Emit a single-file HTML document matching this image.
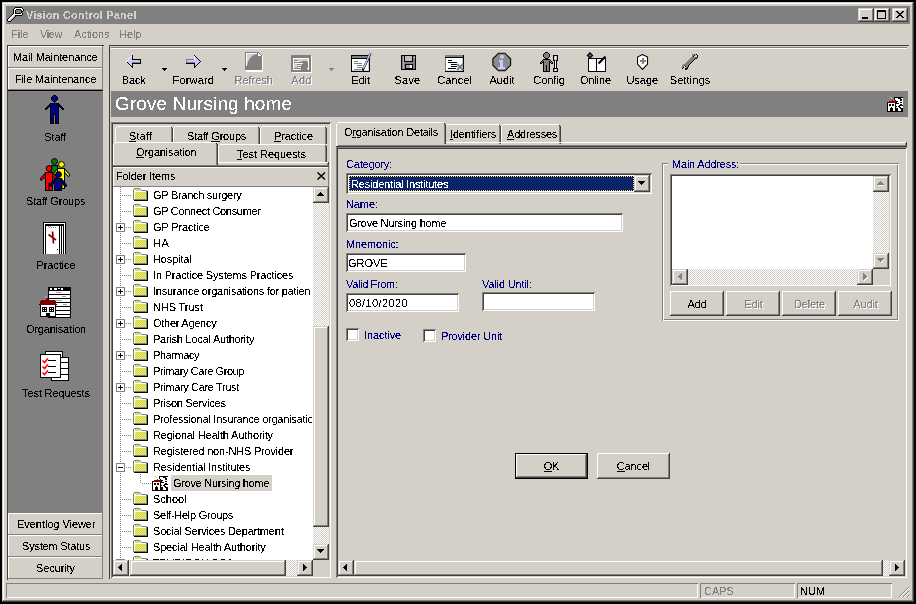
<!DOCTYPE html>
<html><head><meta charset="utf-8"><title>Vision Control Panel</title>
<style>
html,body{margin:0;padding:0}
body{width:916px;height:604px;background:#000;position:relative;overflow:hidden;font-family:"Liberation Sans",sans-serif}
body div,body span{position:absolute;box-sizing:border-box}
span{white-space:pre}
u{text-decoration:none;box-shadow:inset 0 -1px #000}
span{filter:url(#crisp)}
</style></head><body>
<svg width="0" height="0" style="position:absolute"><filter id="crisp"><feComponentTransfer><feFuncA type="discrete" tableValues="0 0 0 0 0 0 0 0 0 1 1 1 1 1 1 1 1 1 1 1"/></feComponentTransfer></filter></svg>
<div style="left:2px;top:2px;width:912px;height:600px;background:#d4d0c8;box-shadow:inset -1px -1px #404040,inset 1px 1px #d4d0c8,inset -2px -2px #808080,inset 2px 2px #ffffff"></div><div style="left:6px;top:6px;width:904px;height:18px;background:#808080"></div><span style="left:26px;top:9px;font:bold 11px/13px 'Liberation Sans',sans-serif;color:#d4d0c8;letter-spacing:0.15px;">Vision Control Panel</span><svg style="position:absolute;left:7px;top:7px;" width="17" height="15" viewBox="0 0 17 15" shape-rendering="crispEdges"><rect x="8" y="0" width="7" height="1" fill="#000"/><rect x="7" y="1" width="1" height="1" fill="#000"/><rect x="8" y="1" width="7" height="1" fill="#fff"/><rect x="15" y="1" width="1" height="1" fill="#000"/><rect x="6" y="2" width="1" height="1" fill="#000"/><rect x="7" y="2" width="2" height="1" fill="#fff"/><rect x="9" y="2" width="5" height="1" fill="#000"/><rect x="14" y="2" width="2" height="1" fill="#fff"/><rect x="16" y="2" width="1" height="1" fill="#000"/><rect x="6" y="3" width="1" height="1" fill="#000"/><rect x="7" y="3" width="1" height="1" fill="#fff"/><rect x="8" y="3" width="1" height="1" fill="#000"/><rect x="9" y="3" width="5" height="1" fill="#808080"/><rect x="14" y="3" width="1" height="1" fill="#000"/><rect x="15" y="3" width="1" height="1" fill="#fff"/><rect x="16" y="3" width="1" height="1" fill="#000"/><rect x="6" y="4" width="1" height="1" fill="#000"/><rect x="7" y="4" width="1" height="1" fill="#fff"/><rect x="8" y="4" width="1" height="1" fill="#000"/><rect x="9" y="4" width="5" height="1" fill="#808080"/><rect x="14" y="4" width="2" height="1" fill="#000"/><rect x="6" y="5" width="1" height="1" fill="#000"/><rect x="7" y="5" width="1" height="1" fill="#fff"/><rect x="8" y="5" width="1" height="1" fill="#000"/><rect x="9" y="5" width="5" height="1" fill="#808080"/><rect x="14" y="5" width="1" height="1" fill="#000"/><rect x="6" y="6" width="1" height="1" fill="#000"/><rect x="7" y="6" width="1" height="1" fill="#fff"/><rect x="8" y="6" width="6" height="1" fill="#000"/><rect x="14" y="6" width="1" height="1" fill="#fff"/><rect x="15" y="6" width="1" height="1" fill="#000"/><rect x="5" y="7" width="1" height="1" fill="#000"/><rect x="6" y="7" width="9" height="1" fill="#fff"/><rect x="15" y="7" width="1" height="1" fill="#000"/><rect x="4" y="8" width="1" height="1" fill="#000"/><rect x="5" y="8" width="2" height="1" fill="#fff"/><rect x="7" y="8" width="1" height="1" fill="#c0c0c0"/><rect x="8" y="8" width="7" height="1" fill="#000"/><rect x="3" y="9" width="1" height="1" fill="#000"/><rect x="4" y="9" width="2" height="1" fill="#fff"/><rect x="6" y="9" width="2" height="1" fill="#c0c0c0"/><rect x="8" y="9" width="1" height="1" fill="#000"/><rect x="2" y="10" width="1" height="1" fill="#000"/><rect x="3" y="10" width="2" height="1" fill="#fff"/><rect x="5" y="10" width="2" height="1" fill="#c0c0c0"/><rect x="7" y="10" width="1" height="1" fill="#000"/><rect x="1" y="11" width="1" height="1" fill="#000"/><rect x="2" y="11" width="2" height="1" fill="#fff"/><rect x="4" y="11" width="2" height="1" fill="#c0c0c0"/><rect x="6" y="11" width="1" height="1" fill="#000"/><rect x="0" y="12" width="1" height="1" fill="#000"/><rect x="1" y="12" width="2" height="1" fill="#fff"/><rect x="3" y="12" width="2" height="1" fill="#c0c0c0"/><rect x="5" y="12" width="1" height="1" fill="#000"/><rect x="0" y="13" width="1" height="1" fill="#000"/><rect x="1" y="13" width="1" height="1" fill="#fff"/><rect x="2" y="13" width="2" height="1" fill="#c0c0c0"/><rect x="4" y="13" width="1" height="1" fill="#000"/><rect x="1" y="14" width="3" height="1" fill="#000"/></svg><div style="left:858px;top:8px;width:16px;height:14px;background:#d4d0c8;box-shadow:inset -1px -1px #404040,inset 1px 1px #d4d0c8,inset -2px -2px #808080,inset 2px 2px #ffffff"></div><div style="left:874px;top:8px;width:16px;height:14px;background:#d4d0c8;box-shadow:inset -1px -1px #404040,inset 1px 1px #d4d0c8,inset -2px -2px #808080,inset 2px 2px #ffffff"></div><div style="left:892px;top:8px;width:16px;height:14px;background:#d4d0c8;box-shadow:inset -1px -1px #404040,inset 1px 1px #d4d0c8,inset -2px -2px #808080,inset 2px 2px #ffffff"></div><div style="left:862px;top:17px;width:6px;height:2px;background:#000"></div><div style="left:877px;top:10px;width:9px;height:9px;box-shadow:inset 0 2px #000,inset 1px 0 #000,inset -1px 0 #000,inset 0 -1px #000"></div><svg style="position:absolute;left:896px;top:11px;" width="8" height="7" viewBox="0 0 8 7" shape-rendering="crispEdges"><path d="M0 0h2v1h1v1h2v-1h1v-1h2v1h-1v1h-1v1h-1v1h1v1h1v1h1v1h-2v-1h-1v-1h-2v1h-1v1h-2v-1h1v-1h1v-1h1v-1h-1v-1h-1v-1h-1z" fill="#000"/></svg><span style="left:11px;top:28px;font:11px/13px 'Liberation Sans',sans-serif;color:#808080;letter-spacing:0px;">File</span><span style="left:40px;top:28px;font:11px/13px 'Liberation Sans',sans-serif;color:#808080;letter-spacing:-0.4px;">View</span><span style="left:74px;top:28px;font:11px/13px 'Liberation Sans',sans-serif;color:#808080;letter-spacing:-0.1px;">Actions</span><span style="left:119px;top:28px;font:11px/13px 'Liberation Sans',sans-serif;color:#808080;letter-spacing:0px;">Help</span><div style="left:7px;top:45px;width:97px;height:535px;box-shadow:inset 1px 1px #404040"></div><div style="left:8px;top:91px;width:95px;height:422px;background:#808080"></div><div style="left:8px;top:46px;width:95px;height:22px;background:#d4d0c8;box-shadow:inset -1px -1px #808080,inset 1px 1px #ffffff"></div><span style="left:13px;top:51px;font:11px/13px 'Liberation Sans',sans-serif;color:#000;letter-spacing:-0.1px;">Mail Maintenance</span><div style="left:8px;top:68px;width:95px;height:22px;background:#d4d0c8;box-shadow:inset -1px -1px #808080,inset 1px 1px #ffffff"></div><span style="left:15px;top:73px;font:11px/13px 'Liberation Sans',sans-serif;color:#000;letter-spacing:-0.15px;">File Maintenance</span><div style="left:8px;top:90px;width:95px;height:1px;background:#000"></div><div style="left:8px;top:513px;width:95px;height:22px;background:#d4d0c8;box-shadow:inset -1px -1px #808080,inset 1px 1px #ffffff"></div><span style="left:17px;top:518px;font:11px/13px 'Liberation Sans',sans-serif;color:#000;letter-spacing:-0.05px;">Eventlog Viewer</span><div style="left:8px;top:535px;width:95px;height:22px;background:#d4d0c8;box-shadow:inset -1px -1px #808080,inset 1px 1px #ffffff"></div><span style="left:22px;top:540px;font:11px/13px 'Liberation Sans',sans-serif;color:#000;letter-spacing:-0.2px;">System Status</span><div style="left:8px;top:557px;width:95px;height:22px;background:#d4d0c8;box-shadow:inset -1px -1px #808080,inset 1px 1px #ffffff"></div><span style="left:36px;top:562px;font:11px/13px 'Liberation Sans',sans-serif;color:#000;letter-spacing:-0.1px;">Security</span><div style="left:109px;top:45px;width:800px;height:534px;box-shadow:inset 1px 1px #404040"></div><div style="left:111px;top:47px;width:796px;height:1px;background:#808080"></div><div style="left:111px;top:48px;width:796px;height:1px;background:#ffffff"></div><div style="left:111px;top:91px;width:797px;height:26px;background:#808080"></div><span style="left:115px;top:93px;font:19px/22px 'Liberation Sans',sans-serif;color:#ffffff;letter-spacing:0.1px;">Grove Nursing home</span><div style="left:6px;top:583px;width:692px;height:15px;box-shadow:inset 1px 1px #808080,inset -1px -1px #ffffff"></div><div style="left:700px;top:583px;width:95px;height:15px;box-shadow:inset 1px 1px #808080,inset -1px -1px #ffffff"></div><div style="left:797px;top:583px;width:95px;height:15px;box-shadow:inset 1px 1px #808080,inset -1px -1px #ffffff"></div><span style="left:704px;top:585px;font:11px/13px 'Liberation Sans',sans-serif;color:#808080;">CAPS</span><span style="left:800px;top:585px;font:11px/13px 'Liberation Sans',sans-serif;color:#000;">NUM</span><svg style="position:absolute;left:125px;top:55px;" width="17" height="13" viewBox="0 0 17 13" shape-rendering="crispEdges"><rect x="7" y="0" width="1" height="1" fill="#000"/><rect x="6" y="1" width="1" height="1" fill="#fff"/><rect x="7" y="1" width="1" height="1" fill="#000"/><rect x="5" y="2" width="1" height="1" fill="#fff"/><rect x="6" y="2" width="1" height="1" fill="#c8c8ff"/><rect x="7" y="2" width="1" height="1" fill="#000"/><rect x="4" y="3" width="1" height="1" fill="#fff"/><rect x="5" y="3" width="2" height="1" fill="#c8c8ff"/><rect x="7" y="3" width="1" height="1" fill="#000"/><rect x="3" y="4" width="1" height="1" fill="#fff"/><rect x="4" y="4" width="3" height="1" fill="#c8c8ff"/><rect x="7" y="4" width="9" height="1" fill="#000"/><rect x="2" y="5" width="1" height="1" fill="#fff"/><rect x="3" y="5" width="12" height="1" fill="#c8c8ff"/><rect x="15" y="5" width="1" height="1" fill="#000"/><rect x="1" y="6" width="1" height="1" fill="#fff"/><rect x="2" y="6" width="13" height="1" fill="#c8c8ff"/><rect x="15" y="6" width="1" height="1" fill="#000"/><rect x="2" y="7" width="1" height="1" fill="#000"/><rect x="3" y="7" width="4" height="1" fill="#c8c8ff"/><rect x="7" y="7" width="8" height="1" fill="#808080"/><rect x="15" y="7" width="1" height="1" fill="#000"/><rect x="3" y="8" width="1" height="1" fill="#000"/><rect x="4" y="8" width="3" height="1" fill="#c8c8ff"/><rect x="7" y="8" width="9" height="1" fill="#000"/><rect x="4" y="9" width="1" height="1" fill="#000"/><rect x="5" y="9" width="2" height="1" fill="#c8c8ff"/><rect x="7" y="9" width="1" height="1" fill="#000"/><rect x="5" y="10" width="1" height="1" fill="#000"/><rect x="6" y="10" width="1" height="1" fill="#c8c8ff"/><rect x="7" y="10" width="1" height="1" fill="#000"/><rect x="6" y="11" width="2" height="1" fill="#000"/><rect x="7" y="12" width="1" height="1" fill="#000"/></svg><svg style="position:absolute;left:185px;top:55px;" width="17" height="13" viewBox="0 0 17 13" shape-rendering="crispEdges"><rect x="9" y="0" width="1" height="1" fill="#000"/><rect x="9" y="1" width="1" height="1" fill="#fff"/><rect x="10" y="1" width="1" height="1" fill="#000"/><rect x="9" y="2" width="1" height="1" fill="#fff"/><rect x="10" y="2" width="1" height="1" fill="#c8c8ff"/><rect x="11" y="2" width="1" height="1" fill="#000"/><rect x="9" y="3" width="1" height="1" fill="#fff"/><rect x="10" y="3" width="2" height="1" fill="#c8c8ff"/><rect x="12" y="3" width="1" height="1" fill="#000"/><rect x="1" y="4" width="8" height="1" fill="#808080"/><rect x="9" y="4" width="1" height="1" fill="#fff"/><rect x="10" y="4" width="3" height="1" fill="#c8c8ff"/><rect x="13" y="4" width="1" height="1" fill="#000"/><rect x="1" y="5" width="1" height="1" fill="#808080"/><rect x="2" y="5" width="12" height="1" fill="#c8c8ff"/><rect x="14" y="5" width="1" height="1" fill="#000"/><rect x="1" y="6" width="1" height="1" fill="#808080"/><rect x="2" y="6" width="13" height="1" fill="#c8c8ff"/><rect x="15" y="6" width="1" height="1" fill="#000"/><rect x="1" y="7" width="9" height="1" fill="#808080"/><rect x="10" y="7" width="4" height="1" fill="#c8c8ff"/><rect x="14" y="7" width="1" height="1" fill="#000"/><rect x="1" y="8" width="9" height="1" fill="#000"/><rect x="10" y="8" width="3" height="1" fill="#c8c8ff"/><rect x="13" y="8" width="1" height="1" fill="#000"/><rect x="9" y="9" width="1" height="1" fill="#000"/><rect x="10" y="9" width="2" height="1" fill="#c8c8ff"/><rect x="12" y="9" width="1" height="1" fill="#000"/><rect x="9" y="10" width="1" height="1" fill="#000"/><rect x="10" y="10" width="1" height="1" fill="#c8c8ff"/><rect x="11" y="10" width="1" height="1" fill="#000"/><rect x="9" y="11" width="2" height="1" fill="#000"/><rect x="9" y="12" width="1" height="1" fill="#000"/></svg><svg style="position:absolute;left:162px;top:68px;" width="5" height="3" viewBox="0 0 5 3" shape-rendering="crispEdges"><path d="M0 0h5v1h-1v1h-1v1h-1v-1h-1v-1h-1z" fill="#000"/></svg><svg style="position:absolute;left:222px;top:68px;" width="5" height="3" viewBox="0 0 5 3" shape-rendering="crispEdges"><path d="M0 0h5v1h-1v1h-1v1h-1v-1h-1v-1h-1z" fill="#000"/></svg><svg style="position:absolute;left:329px;top:68px;" width="5" height="3" viewBox="0 0 5 3" shape-rendering="crispEdges"><path d="M0 0h5v1h-1v1h-1v1h-1v-1h-1v-1h-1z" fill="#808080"/></svg><svg style="position:absolute;left:245px;top:52px;" width="19" height="20" viewBox="0 0 19 20" shape-rendering="crispEdges"><path d="M1 1h13l4 4v15h-17z" fill="#fff"/><path d="M0 0h13l4 4v14h-17z" fill="#808080"/><path d="M1 1h11v1h-10v12h-1z" fill="#fff"/><path d="M2 2H11.5C7 3 3.5 7 2 13.5Z" fill="#d4d0c8" shape-rendering="auto"/><path d="M13 1h1v1h1v1h1v1h-3z" fill="#fff"/><path d="M12 1h1v3h-1z" fill="#808080"/></svg><svg style="position:absolute;left:290px;top:54px;" width="22" height="19" viewBox="0 0 22 19" shape-rendering="crispEdges"><path d="M2 2h20v17h-20z" fill="#fff"/><path d="M1 1h20v17h-20z" fill="#808080"/><path d="M3 4h16v12h-16z" fill="#fff"/><path d="M4 5h14v10h-14z" fill="#d4d0c8"/><path d="M4 6h4v1h-4zM4 8h9v1h-9zM7 10h4v1h-4zM7 12h4v1h-4zM4 14h9v1h-9z" fill="#808080"/><path d="M12 7h4l2 2v7h-7v-5h1z" fill="#808080"/><path d="M17 14h1v1h-1z" fill="#fff"/><path d="M5 7h4v1h-4zM5 9h8v1h-8zM8 11h3v1h-3zM8 13h3v1h-3z" fill="#fff"/></svg><svg style="position:absolute;left:350px;top:51px;" width="23" height="22" viewBox="0 0 23 22" shape-rendering="crispEdges"><path d="M1 4h19v17h-19z" fill="#000"/><path d="M2 5h18v2h-18z" fill="#808080"/><path d="M2 8h17v12h-17z" fill="#fff"/><path d="M2 19h17v1h-17zM18 8h1v12h-1z" fill="#c8c8ff"/><path d="M4 10h4v1h-4zM4 12h8v1h-8zM7 14h5v1h-5zM7 16h5v1h-5zM4 18h7v1h-7z" fill="#808080"/><path d="M12.5 19.5L20.5 2.5" stroke="#000" stroke-width="2.2" shape-rendering="auto"/><path d="M13.3 17.5L20.3 2.5" stroke="#c8c8ff" stroke-width="1.5" shape-rendering="auto"/></svg><svg style="position:absolute;left:401px;top:55px;" width="16" height="16" viewBox="0 0 16 16" shape-rendering="crispEdges"><path d="M0 0h15v15h-15z" fill="#000"/><path d="M1 1h13v13h-13z" fill="#808080"/><path d="M3 1h9v6h-9z" fill="#000"/><path d="M4 1h7v5h-7z" fill="#c0c0c0"/><path d="M4 9h8v5h-8z" fill="#000"/><path d="M5 10h6v3h-6z" fill="#a0a0a0"/><path d="M9 10h2v3h-2z" fill="#fff"/><path d="M13 2h1v1h-1z" fill="#fff"/><path d="M2 1h1v13h-1z" fill="#b0b0b0"/></svg><svg style="position:absolute;left:444px;top:54px;" width="23" height="19" viewBox="0 0 23 19" shape-rendering="crispEdges"><path d="M1 1h19v17h-19z" fill="#000"/><path d="M1 1h18v2h-18z" fill="#808080"/><path d="M2 4h17v13h-17z" fill="#fff"/><path d="M2 16h17v1h-17zM18 4h1v13h-1z" fill="#c8c8ff"/><path d="M1 4h1v13h-1z" fill="#808080"/><path d="M4 6h4v1h-4zM4 8h9v1h-9zM7 10h6v1h-6zM7 12h6v1h-6zM4 14h8v1h-8z" fill="#000"/><path d="M13 10l6 6M19 10l-6 6" stroke="#808080" stroke-width="2" shape-rendering="auto"/></svg><svg style="position:absolute;left:492px;top:52px;" width="20" height="20" viewBox="0 0 20 20" shape-rendering="crispEdges"><path d="M6.5 1.2h6.5l5.6 5.6v6.4l-5.6 5.6h-6.5l-5.6-5.6v-6.4z" fill="#8c8c8c" stroke="#000" stroke-width="1.1" shape-rendering="auto"/><circle cx="10" cy="4.8" r="2" fill="#c8c8ff" shape-rendering="auto"/><path d="M7 8h4v7h2v2h-7v-2h2v-5h-1z" fill="#c8c8ff"/></svg><svg style="position:absolute;left:539px;top:52px;" width="20" height="20" viewBox="0 0 20 20" shape-rendering="crispEdges"><rect x="6" y="0" width="3" height="1" fill="#000"/><rect x="5" y="1" width="1" height="1" fill="#000"/><rect x="6" y="1" width="3" height="1" fill="#808080"/><rect x="9" y="1" width="1" height="1" fill="#000"/><rect x="4" y="2" width="1" height="1" fill="#000"/><rect x="5" y="2" width="5" height="1" fill="#808080"/><rect x="10" y="2" width="1" height="1" fill="#000"/><rect x="4" y="3" width="1" height="1" fill="#000"/><rect x="5" y="3" width="5" height="1" fill="#808080"/><rect x="10" y="3" width="1" height="1" fill="#000"/><rect x="14" y="3" width="5" height="1" fill="#000"/><rect x="4" y="4" width="1" height="1" fill="#000"/><rect x="5" y="4" width="5" height="1" fill="#808080"/><rect x="10" y="4" width="1" height="1" fill="#000"/><rect x="14" y="4" width="1" height="1" fill="#000"/><rect x="15" y="4" width="1" height="1" fill="#c0c0c0"/><rect x="16" y="4" width="1" height="1" fill="#fff"/><rect x="17" y="4" width="1" height="1" fill="#c0c0c0"/><rect x="18" y="4" width="1" height="1" fill="#000"/><rect x="5" y="5" width="1" height="1" fill="#000"/><rect x="6" y="5" width="3" height="1" fill="#808080"/><rect x="9" y="5" width="1" height="1" fill="#000"/><rect x="14" y="5" width="1" height="1" fill="#000"/><rect x="15" y="5" width="1" height="1" fill="#c0c0c0"/><rect x="16" y="5" width="1" height="1" fill="#fff"/><rect x="17" y="5" width="1" height="1" fill="#c0c0c0"/><rect x="18" y="5" width="1" height="1" fill="#000"/><rect x="6" y="6" width="3" height="1" fill="#000"/><rect x="14" y="6" width="1" height="1" fill="#000"/><rect x="15" y="6" width="1" height="1" fill="#c0c0c0"/><rect x="16" y="6" width="1" height="1" fill="#fff"/><rect x="17" y="6" width="1" height="1" fill="#c0c0c0"/><rect x="18" y="6" width="1" height="1" fill="#000"/><rect x="4" y="7" width="7" height="1" fill="#000"/><rect x="14" y="7" width="1" height="1" fill="#000"/><rect x="15" y="7" width="3" height="1" fill="#c0c0c0"/><rect x="18" y="7" width="1" height="1" fill="#000"/><rect x="3" y="8" width="1" height="1" fill="#000"/><rect x="4" y="8" width="7" height="1" fill="#808080"/><rect x="11" y="8" width="1" height="1" fill="#000"/><rect x="14" y="8" width="2" height="1" fill="#000"/><rect x="16" y="8" width="1" height="1" fill="#c0c0c0"/><rect x="17" y="8" width="2" height="1" fill="#000"/><rect x="2" y="9" width="1" height="1" fill="#000"/><rect x="3" y="9" width="1" height="1" fill="#808080"/><rect x="4" y="9" width="1" height="1" fill="#000"/><rect x="5" y="9" width="5" height="1" fill="#808080"/><rect x="10" y="9" width="1" height="1" fill="#000"/><rect x="11" y="9" width="1" height="1" fill="#808080"/><rect x="12" y="9" width="1" height="1" fill="#000"/><rect x="15" y="9" width="1" height="1" fill="#000"/><rect x="16" y="9" width="1" height="1" fill="#fff"/><rect x="17" y="9" width="1" height="1" fill="#000"/><rect x="1" y="10" width="1" height="1" fill="#000"/><rect x="2" y="10" width="1" height="1" fill="#808080"/><rect x="3" y="10" width="2" height="1" fill="#000"/><rect x="5" y="10" width="5" height="1" fill="#808080"/><rect x="10" y="10" width="2" height="1" fill="#000"/><rect x="12" y="10" width="1" height="1" fill="#808080"/><rect x="13" y="10" width="1" height="1" fill="#000"/><rect x="15" y="10" width="1" height="1" fill="#000"/><rect x="16" y="10" width="1" height="1" fill="#fff"/><rect x="17" y="10" width="1" height="1" fill="#000"/><rect x="1" y="11" width="2" height="1" fill="#000"/><rect x="4" y="11" width="1" height="1" fill="#000"/><rect x="5" y="11" width="5" height="1" fill="#808080"/><rect x="10" y="11" width="1" height="1" fill="#000"/><rect x="12" y="11" width="2" height="1" fill="#000"/><rect x="15" y="11" width="1" height="1" fill="#000"/><rect x="16" y="11" width="1" height="1" fill="#fff"/><rect x="17" y="11" width="1" height="1" fill="#000"/><rect x="4" y="12" width="1" height="1" fill="#000"/><rect x="5" y="12" width="5" height="1" fill="#808080"/><rect x="10" y="12" width="1" height="1" fill="#000"/><rect x="15" y="12" width="1" height="1" fill="#000"/><rect x="16" y="12" width="1" height="1" fill="#fff"/><rect x="17" y="12" width="1" height="1" fill="#000"/><rect x="4" y="13" width="1" height="1" fill="#000"/><rect x="5" y="13" width="2" height="1" fill="#808080"/><rect x="7" y="13" width="1" height="1" fill="#000"/><rect x="8" y="13" width="2" height="1" fill="#808080"/><rect x="10" y="13" width="1" height="1" fill="#000"/><rect x="15" y="13" width="1" height="1" fill="#000"/><rect x="16" y="13" width="1" height="1" fill="#fff"/><rect x="17" y="13" width="1" height="1" fill="#000"/><rect x="4" y="14" width="1" height="1" fill="#000"/><rect x="5" y="14" width="2" height="1" fill="#808080"/><rect x="7" y="14" width="1" height="1" fill="#000"/><rect x="8" y="14" width="2" height="1" fill="#808080"/><rect x="10" y="14" width="1" height="1" fill="#000"/><rect x="15" y="14" width="1" height="1" fill="#000"/><rect x="16" y="14" width="1" height="1" fill="#fff"/><rect x="17" y="14" width="1" height="1" fill="#000"/><rect x="4" y="15" width="1" height="1" fill="#000"/><rect x="5" y="15" width="2" height="1" fill="#808080"/><rect x="7" y="15" width="1" height="1" fill="#000"/><rect x="8" y="15" width="2" height="1" fill="#808080"/><rect x="10" y="15" width="1" height="1" fill="#000"/><rect x="15" y="15" width="1" height="1" fill="#000"/><rect x="16" y="15" width="1" height="1" fill="#fff"/><rect x="17" y="15" width="1" height="1" fill="#000"/><rect x="4" y="16" width="1" height="1" fill="#000"/><rect x="5" y="16" width="2" height="1" fill="#808080"/><rect x="7" y="16" width="1" height="1" fill="#000"/><rect x="8" y="16" width="2" height="1" fill="#808080"/><rect x="10" y="16" width="1" height="1" fill="#000"/><rect x="14" y="16" width="5" height="1" fill="#000"/><rect x="4" y="17" width="1" height="1" fill="#000"/><rect x="5" y="17" width="2" height="1" fill="#808080"/><rect x="7" y="17" width="1" height="1" fill="#000"/><rect x="8" y="17" width="2" height="1" fill="#808080"/><rect x="10" y="17" width="1" height="1" fill="#000"/><rect x="14" y="17" width="1" height="1" fill="#000"/><rect x="15" y="17" width="1" height="1" fill="#c0c0c0"/><rect x="16" y="17" width="1" height="1" fill="#fff"/><rect x="17" y="17" width="1" height="1" fill="#c0c0c0"/><rect x="18" y="17" width="1" height="1" fill="#000"/><rect x="4" y="18" width="1" height="1" fill="#000"/><rect x="5" y="18" width="2" height="1" fill="#808080"/><rect x="7" y="18" width="1" height="1" fill="#000"/><rect x="8" y="18" width="2" height="1" fill="#808080"/><rect x="10" y="18" width="1" height="1" fill="#000"/><rect x="14" y="18" width="1" height="1" fill="#000"/><rect x="15" y="18" width="1" height="1" fill="#c0c0c0"/><rect x="16" y="18" width="1" height="1" fill="#fff"/><rect x="17" y="18" width="1" height="1" fill="#c0c0c0"/><rect x="18" y="18" width="1" height="1" fill="#000"/><rect x="4" y="19" width="7" height="1" fill="#000"/><rect x="14" y="19" width="5" height="1" fill="#000"/></svg><svg style="position:absolute;left:586px;top:52px;" width="21" height="21" viewBox="0 0 21 21" shape-rendering="crispEdges"><path d="M4 0.8l2.6 2.6-2.6 2.6-2.6-2.6z" fill="#606060" stroke="#000" stroke-width="1.2" shape-rendering="auto"/><path d="M2 6h18v14h-18z" fill="#000"/><path d="M3 7h7v12h-7zM11 7h8v12h-8z" fill="#fff"/><path d="M12.5 11.5L19.5 4.5" stroke="#000" stroke-width="2.2" shape-rendering="auto"/></svg><svg style="position:absolute;left:637px;top:54px;" width="12" height="16" viewBox="0 0 12 16" shape-rendering="crispEdges"><path d="M5.5 0.6L10.5 3v7l-5 5.4-5-5.4v-7z" fill="#fff" stroke="#000" stroke-width="1.1" shape-rendering="auto"/><path d="M5 4h2v2h2v2h-2v2h-2v-2h-2v-2h2z" fill="#808080"/></svg><svg style="position:absolute;left:681px;top:53px;" width="18" height="17" viewBox="0 0 18 17" shape-rendering="crispEdges"><rect x="11" y="1" width="4" height="1" fill="#808080"/><rect x="15" y="1" width="1" height="1" fill="#000"/><rect x="11" y="2" width="2" height="1" fill="#808080"/><rect x="13" y="2" width="1" height="1" fill="#000"/><rect x="16" y="2" width="1" height="1" fill="#000"/><rect x="11" y="3" width="1" height="1" fill="#808080"/><rect x="12" y="3" width="1" height="1" fill="#000"/><rect x="16" y="3" width="1" height="1" fill="#000"/><rect x="10" y="4" width="6" height="1" fill="#808080"/><rect x="16" y="4" width="1" height="1" fill="#000"/><rect x="9" y="5" width="5" height="1" fill="#808080"/><rect x="14" y="5" width="2" height="1" fill="#000"/><rect x="8" y="6" width="5" height="1" fill="#808080"/><rect x="13" y="6" width="1" height="1" fill="#000"/><rect x="7" y="7" width="5" height="1" fill="#808080"/><rect x="12" y="7" width="1" height="1" fill="#000"/><rect x="6" y="8" width="5" height="1" fill="#808080"/><rect x="11" y="8" width="1" height="1" fill="#000"/><rect x="5" y="9" width="5" height="1" fill="#808080"/><rect x="10" y="9" width="1" height="1" fill="#000"/><rect x="4" y="10" width="5" height="1" fill="#808080"/><rect x="9" y="10" width="1" height="1" fill="#000"/><rect x="2" y="11" width="6" height="1" fill="#808080"/><rect x="8" y="11" width="1" height="1" fill="#000"/><rect x="1" y="12" width="6" height="1" fill="#808080"/><rect x="7" y="12" width="1" height="1" fill="#000"/><rect x="1" y="13" width="2" height="1" fill="#808080"/><rect x="4" y="13" width="1" height="1" fill="#000"/><rect x="5" y="13" width="2" height="1" fill="#808080"/><rect x="7" y="13" width="1" height="1" fill="#000"/><rect x="1" y="14" width="1" height="1" fill="#808080"/><rect x="2" y="14" width="1" height="1" fill="#000"/><rect x="5" y="14" width="1" height="1" fill="#808080"/><rect x="6" y="14" width="1" height="1" fill="#000"/><rect x="1" y="15" width="1" height="1" fill="#000"/><rect x="4" y="15" width="3" height="1" fill="#000"/><rect x="4" y="16" width="2" height="1" fill="#000"/></svg><span style="left:73.69999999999999px;top:74px;width:120px;text-align:center;font:11px/13px 'Liberation Sans',sans-serif;color:#000;letter-spacing:-0.1px;">Back</span><span style="left:133.3px;top:74px;width:120px;text-align:center;font:11px/13px 'Liberation Sans',sans-serif;color:#000;letter-spacing:0.2px;">Forward</span><span style="left:193.7px;top:74px;width:120px;text-align:center;font:11px/13px 'Liberation Sans',sans-serif;color:#808080;letter-spacing:-0.05px;text-shadow:1px 1px #fff;">Refresh</span><span style="left:241.5px;top:74px;width:120px;text-align:center;font:11px/13px 'Liberation Sans',sans-serif;color:#808080;letter-spacing:0.3px;text-shadow:1px 1px #fff;">Add</span><span style="left:300.5px;top:74px;width:120px;text-align:center;font:11px/13px 'Liberation Sans',sans-serif;color:#000;letter-spacing:-0.2px;">Edit</span><span style="left:347.5px;top:74px;width:120px;text-align:center;font:11px/13px 'Liberation Sans',sans-serif;color:#000;letter-spacing:0.2px;">Save</span><span style="left:394.6px;top:74px;width:120px;text-align:center;font:11px/13px 'Liberation Sans',sans-serif;color:#000;letter-spacing:0.1px;">Cancel</span><span style="left:442px;top:74px;width:120px;text-align:center;font:11px/13px 'Liberation Sans',sans-serif;color:#000;letter-spacing:0.0px;">Audit</span><span style="left:489px;top:74px;width:120px;text-align:center;font:11px/13px 'Liberation Sans',sans-serif;color:#000;letter-spacing:-0.05px;">Config</span><span style="left:535.5px;top:74px;width:120px;text-align:center;font:11px/13px 'Liberation Sans',sans-serif;color:#000;letter-spacing:-0.1px;">Online</span><span style="left:582.3px;top:74px;width:120px;text-align:center;font:11px/13px 'Liberation Sans',sans-serif;color:#000;letter-spacing:0.0px;">Usage</span><span style="left:630px;top:74px;width:120px;text-align:center;font:11px/13px 'Liberation Sans',sans-serif;color:#000;letter-spacing:0.1px;">Settings</span><svg style="position:absolute;left:887px;top:97px;" width="16" height="15" viewBox="0 0 16 15" shape-rendering="crispEdges"><rect x="3" y="0" width="1" height="1" fill="#c0c0c0"/><rect x="7" y="0" width="9" height="1" fill="#000"/><rect x="4" y="1" width="1" height="1" fill="#c0c0c0"/><rect x="7" y="1" width="1" height="1" fill="#000"/><rect x="8" y="1" width="3" height="1" fill="#fff"/><rect x="11" y="1" width="3" height="1" fill="#000"/><rect x="14" y="1" width="2" height="1" fill="#fff"/><rect x="7" y="2" width="1" height="1" fill="#000"/><rect x="8" y="2" width="5" height="1" fill="#fff"/><rect x="13" y="2" width="2" height="1" fill="#000"/><rect x="15" y="2" width="1" height="1" fill="#fff"/><rect x="5" y="3" width="1" height="1" fill="#800000"/><rect x="8" y="3" width="1" height="1" fill="#000"/><rect x="9" y="3" width="4" height="1" fill="#fff"/><rect x="13" y="3" width="2" height="1" fill="#000"/><rect x="15" y="3" width="1" height="1" fill="#fff"/><rect x="2" y="4" width="7" height="1" fill="#800000"/><rect x="9" y="4" width="2" height="1" fill="#000"/><rect x="11" y="4" width="5" height="1" fill="#fff"/><rect x="0" y="5" width="1" height="1" fill="#000"/><rect x="1" y="5" width="8" height="1" fill="#800000"/><rect x="9" y="5" width="1" height="1" fill="#000"/><rect x="10" y="5" width="3" height="1" fill="#fff"/><rect x="13" y="5" width="2" height="1" fill="#000"/><rect x="15" y="5" width="1" height="1" fill="#fff"/><rect x="0" y="6" width="1" height="1" fill="#000"/><rect x="1" y="6" width="7" height="1" fill="#fff"/><rect x="8" y="6" width="4" height="1" fill="#000"/><rect x="12" y="6" width="4" height="1" fill="#fff"/><rect x="0" y="7" width="1" height="1" fill="#000"/><rect x="1" y="7" width="1" height="1" fill="#fff"/><rect x="2" y="7" width="2" height="1" fill="#000"/><rect x="4" y="7" width="1" height="1" fill="#fff"/><rect x="5" y="7" width="2" height="1" fill="#000"/><rect x="7" y="7" width="1" height="1" fill="#fff"/><rect x="8" y="7" width="1" height="1" fill="#000"/><rect x="9" y="7" width="4" height="1" fill="#fff"/><rect x="13" y="7" width="2" height="1" fill="#000"/><rect x="15" y="7" width="1" height="1" fill="#fff"/><rect x="0" y="8" width="1" height="1" fill="#000"/><rect x="1" y="8" width="1" height="1" fill="#fff"/><rect x="2" y="8" width="2" height="1" fill="#000"/><rect x="4" y="8" width="1" height="1" fill="#fff"/><rect x="5" y="8" width="2" height="1" fill="#000"/><rect x="7" y="8" width="1" height="1" fill="#fff"/><rect x="8" y="8" width="1" height="1" fill="#000"/><rect x="9" y="8" width="3" height="1" fill="#fff"/><rect x="12" y="8" width="4" height="1" fill="#000"/><rect x="0" y="9" width="1" height="1" fill="#000"/><rect x="1" y="9" width="7" height="1" fill="#fff"/><rect x="8" y="9" width="2" height="1" fill="#000"/><rect x="10" y="9" width="1" height="1" fill="#fff"/><rect x="11" y="9" width="2" height="1" fill="#000"/><rect x="13" y="9" width="3" height="1" fill="#fff"/><rect x="0" y="10" width="1" height="1" fill="#000"/><rect x="1" y="10" width="3" height="1" fill="#fff"/><rect x="4" y="10" width="1" height="1" fill="#000"/><rect x="5" y="10" width="3" height="1" fill="#fff"/><rect x="8" y="10" width="1" height="1" fill="#000"/><rect x="9" y="10" width="3" height="1" fill="#fff"/><rect x="12" y="10" width="2" height="1" fill="#000"/><rect x="14" y="10" width="2" height="1" fill="#fff"/><rect x="0" y="11" width="1" height="1" fill="#000"/><rect x="1" y="11" width="2" height="1" fill="#fff"/><rect x="3" y="11" width="3" height="1" fill="#000"/><rect x="6" y="11" width="2" height="1" fill="#fff"/><rect x="8" y="11" width="3" height="1" fill="#000"/><rect x="11" y="11" width="2" height="1" fill="#fff"/><rect x="13" y="11" width="3" height="1" fill="#000"/><rect x="0" y="12" width="1" height="1" fill="#000"/><rect x="1" y="12" width="2" height="1" fill="#fff"/><rect x="3" y="12" width="3" height="1" fill="#000"/><rect x="6" y="12" width="2" height="1" fill="#fff"/><rect x="8" y="12" width="3" height="1" fill="#000"/><rect x="11" y="12" width="3" height="1" fill="#fff"/><rect x="14" y="12" width="2" height="1" fill="#000"/><rect x="0" y="13" width="1" height="1" fill="#000"/><rect x="1" y="13" width="2" height="1" fill="#fff"/><rect x="3" y="13" width="3" height="1" fill="#000"/><rect x="6" y="13" width="2" height="1" fill="#fff"/><rect x="8" y="13" width="3" height="1" fill="#000"/><rect x="11" y="13" width="3" height="1" fill="#fff"/><rect x="14" y="13" width="2" height="1" fill="#000"/><rect x="0" y="14" width="16" height="1" fill="#000"/></svg><svg style="position:absolute;left:45px;top:95px;" width="19" height="29" viewBox="0 0 19 29" shape-rendering="crispEdges"><rect x="8" y="0" width="3" height="1" fill="#000"/><rect x="7" y="1" width="1" height="1" fill="#000"/><rect x="8" y="1" width="3" height="1" fill="#000080"/><rect x="11" y="1" width="1" height="1" fill="#000"/><rect x="6" y="2" width="1" height="1" fill="#000"/><rect x="7" y="2" width="5" height="1" fill="#000080"/><rect x="12" y="2" width="1" height="1" fill="#000"/><rect x="6" y="3" width="1" height="1" fill="#000"/><rect x="7" y="3" width="5" height="1" fill="#000080"/><rect x="12" y="3" width="1" height="1" fill="#000"/><rect x="6" y="4" width="1" height="1" fill="#000"/><rect x="7" y="4" width="5" height="1" fill="#000080"/><rect x="12" y="4" width="1" height="1" fill="#000"/><rect x="7" y="5" width="1" height="1" fill="#000"/><rect x="8" y="5" width="3" height="1" fill="#000080"/><rect x="11" y="5" width="1" height="1" fill="#000"/><rect x="8" y="6" width="3" height="1" fill="#000"/><rect x="9" y="7" width="1" height="1" fill="#000"/><rect x="5" y="8" width="9" height="1" fill="#000"/><rect x="4" y="9" width="1" height="1" fill="#000"/><rect x="5" y="9" width="9" height="1" fill="#000080"/><rect x="14" y="9" width="1" height="1" fill="#000"/><rect x="3" y="10" width="1" height="1" fill="#000"/><rect x="4" y="10" width="1" height="1" fill="#000080"/><rect x="5" y="10" width="1" height="1" fill="#000"/><rect x="6" y="10" width="7" height="1" fill="#000080"/><rect x="13" y="10" width="1" height="1" fill="#000"/><rect x="14" y="10" width="1" height="1" fill="#000080"/><rect x="15" y="10" width="1" height="1" fill="#000"/><rect x="2" y="11" width="1" height="1" fill="#000"/><rect x="3" y="11" width="1" height="1" fill="#000080"/><rect x="4" y="11" width="2" height="1" fill="#000"/><rect x="6" y="11" width="7" height="1" fill="#000080"/><rect x="13" y="11" width="2" height="1" fill="#000"/><rect x="15" y="11" width="1" height="1" fill="#000080"/><rect x="16" y="11" width="1" height="1" fill="#000"/><rect x="1" y="12" width="1" height="1" fill="#000"/><rect x="2" y="12" width="1" height="1" fill="#000080"/><rect x="3" y="12" width="1" height="1" fill="#000"/><rect x="5" y="12" width="1" height="1" fill="#000"/><rect x="6" y="12" width="7" height="1" fill="#000080"/><rect x="13" y="12" width="1" height="1" fill="#000"/><rect x="15" y="12" width="1" height="1" fill="#000"/><rect x="16" y="12" width="1" height="1" fill="#000080"/><rect x="17" y="12" width="1" height="1" fill="#000"/><rect x="0" y="13" width="1" height="1" fill="#000"/><rect x="1" y="13" width="1" height="1" fill="#000080"/><rect x="2" y="13" width="1" height="1" fill="#000"/><rect x="5" y="13" width="1" height="1" fill="#000"/><rect x="6" y="13" width="7" height="1" fill="#000080"/><rect x="13" y="13" width="1" height="1" fill="#000"/><rect x="16" y="13" width="1" height="1" fill="#000"/><rect x="17" y="13" width="1" height="1" fill="#000080"/><rect x="18" y="13" width="1" height="1" fill="#000"/><rect x="0" y="14" width="2" height="1" fill="#000"/><rect x="5" y="14" width="1" height="1" fill="#000"/><rect x="6" y="14" width="7" height="1" fill="#000080"/><rect x="13" y="14" width="1" height="1" fill="#000"/><rect x="17" y="14" width="2" height="1" fill="#000"/><rect x="5" y="15" width="1" height="1" fill="#000"/><rect x="6" y="15" width="7" height="1" fill="#000080"/><rect x="13" y="15" width="1" height="1" fill="#000"/><rect x="5" y="16" width="1" height="1" fill="#000"/><rect x="6" y="16" width="7" height="1" fill="#000080"/><rect x="13" y="16" width="1" height="1" fill="#000"/><rect x="5" y="17" width="1" height="1" fill="#000"/><rect x="6" y="17" width="7" height="1" fill="#000080"/><rect x="13" y="17" width="1" height="1" fill="#000"/><rect x="5" y="18" width="1" height="1" fill="#000"/><rect x="6" y="18" width="7" height="1" fill="#000080"/><rect x="13" y="18" width="1" height="1" fill="#000"/><rect x="5" y="19" width="1" height="1" fill="#000"/><rect x="6" y="19" width="2" height="1" fill="#000080"/><rect x="8" y="19" width="3" height="1" fill="#000"/><rect x="11" y="19" width="2" height="1" fill="#000080"/><rect x="13" y="19" width="1" height="1" fill="#000"/><rect x="5" y="20" width="1" height="1" fill="#000"/><rect x="6" y="20" width="2" height="1" fill="#000080"/><rect x="8" y="20" width="1" height="1" fill="#000"/><rect x="10" y="20" width="1" height="1" fill="#000"/><rect x="11" y="20" width="2" height="1" fill="#000080"/><rect x="13" y="20" width="1" height="1" fill="#000"/><rect x="5" y="21" width="1" height="1" fill="#000"/><rect x="6" y="21" width="2" height="1" fill="#000080"/><rect x="8" y="21" width="1" height="1" fill="#000"/><rect x="10" y="21" width="1" height="1" fill="#000"/><rect x="11" y="21" width="2" height="1" fill="#000080"/><rect x="13" y="21" width="1" height="1" fill="#000"/><rect x="5" y="22" width="1" height="1" fill="#000"/><rect x="6" y="22" width="2" height="1" fill="#000080"/><rect x="8" y="22" width="1" height="1" fill="#000"/><rect x="10" y="22" width="1" height="1" fill="#000"/><rect x="11" y="22" width="2" height="1" fill="#000080"/><rect x="13" y="22" width="1" height="1" fill="#000"/><rect x="5" y="23" width="1" height="1" fill="#000"/><rect x="6" y="23" width="2" height="1" fill="#000080"/><rect x="8" y="23" width="1" height="1" fill="#000"/><rect x="10" y="23" width="1" height="1" fill="#000"/><rect x="11" y="23" width="2" height="1" fill="#000080"/><rect x="13" y="23" width="1" height="1" fill="#000"/><rect x="5" y="24" width="1" height="1" fill="#000"/><rect x="6" y="24" width="2" height="1" fill="#000080"/><rect x="8" y="24" width="1" height="1" fill="#000"/><rect x="10" y="24" width="1" height="1" fill="#000"/><rect x="11" y="24" width="2" height="1" fill="#000080"/><rect x="13" y="24" width="1" height="1" fill="#000"/><rect x="5" y="25" width="1" height="1" fill="#000"/><rect x="6" y="25" width="2" height="1" fill="#000080"/><rect x="8" y="25" width="1" height="1" fill="#000"/><rect x="10" y="25" width="1" height="1" fill="#000"/><rect x="11" y="25" width="2" height="1" fill="#000080"/><rect x="13" y="25" width="1" height="1" fill="#000"/><rect x="5" y="26" width="1" height="1" fill="#000"/><rect x="6" y="26" width="2" height="1" fill="#000080"/><rect x="8" y="26" width="1" height="1" fill="#000"/><rect x="10" y="26" width="1" height="1" fill="#000"/><rect x="11" y="26" width="2" height="1" fill="#000080"/><rect x="13" y="26" width="1" height="1" fill="#000"/><rect x="5" y="27" width="1" height="1" fill="#000"/><rect x="6" y="27" width="2" height="1" fill="#000080"/><rect x="8" y="27" width="1" height="1" fill="#000"/><rect x="10" y="27" width="1" height="1" fill="#000"/><rect x="11" y="27" width="2" height="1" fill="#000080"/><rect x="13" y="27" width="1" height="1" fill="#000"/><rect x="5" y="28" width="4" height="1" fill="#000"/><rect x="10" y="28" width="4" height="1" fill="#000"/></svg><svg style="position:absolute;left:38px;top:156px;" width="34" height="36" viewBox="0 0 34 36" shape-rendering="crispEdges"><g shape-rendering="auto"><rect x="13.5" y="9.5" width="6.0" height="10.5" fill="#008000" stroke="#000" stroke-width="1"/><circle cx="16.5" cy="5.5" r="2.9" fill="#008000" stroke="#000" stroke-width="1"/></g><g shape-rendering="auto"><path d="M20 14L16.5 18.5" stroke="#000" stroke-width="3.2" stroke-linecap="round"/><path d="M20 14L16.5 18.5" stroke="#ffff00" stroke-width="1.3" stroke-linecap="round"/><path d="M26 14L30.5 19" stroke="#000" stroke-width="3.2" stroke-linecap="round"/><path d="M26 14L30.5 19" stroke="#ffff00" stroke-width="1.3" stroke-linecap="round"/><rect x="19.5" y="12.5" width="7.0" height="20.0" fill="#ffff00" stroke="#000" stroke-width="1"/><rect x="23.5" y="28" width="1" height="4.5" fill="#000"/><circle cx="23.5" cy="8.5" r="2.9" fill="#ffff00" stroke="#000" stroke-width="1"/></g><g shape-rendering="auto"><path d="M8 18L3.5 23" stroke="#000" stroke-width="3.2" stroke-linecap="round"/><path d="M8 18L3.5 23" stroke="#ff0000" stroke-width="1.3" stroke-linecap="round"/><path d="M14 18L17.5 21.5" stroke="#000" stroke-width="3.2" stroke-linecap="round"/><path d="M14 18L17.5 21.5" stroke="#ff0000" stroke-width="1.3" stroke-linecap="round"/><rect x="7.5" y="16.5" width="7.0" height="18.0" fill="#ff0000" stroke="#000" stroke-width="1"/><rect x="10.5" y="27" width="1.2" height="7.5" fill="#000"/><circle cx="11" cy="12.5" r="2.9" fill="#ff0000" stroke="#000" stroke-width="1"/></g><g shape-rendering="auto"><path d="M17 24L12.5 29.5" stroke="#000" stroke-width="3.2" stroke-linecap="round"/><path d="M17 24L12.5 29.5" stroke="#000080" stroke-width="1.3" stroke-linecap="round"/><path d="M23 24L27.5 29.5" stroke="#000" stroke-width="3.2" stroke-linecap="round"/><path d="M23 24L27.5 29.5" stroke="#000080" stroke-width="1.3" stroke-linecap="round"/><rect x="16.5" y="22.5" width="7.0" height="12.0" fill="#000080" stroke="#000" stroke-width="1"/><circle cx="20.5" cy="18.5" r="2.9" fill="#000080" stroke="#000" stroke-width="1"/></g></svg><svg style="position:absolute;left:43px;top:222px;" width="23" height="32" viewBox="0 0 23 32" shape-rendering="crispEdges"><rect x="0" y="0" width="23" height="1" fill="#000"/><rect x="0" y="1" width="1" height="1" fill="#000"/><rect x="1" y="1" width="21" height="1" fill="#fff"/><rect x="22" y="1" width="1" height="1" fill="#000"/><rect x="0" y="2" width="1" height="1" fill="#000"/><rect x="1" y="2" width="1" height="1" fill="#fff"/><rect x="2" y="2" width="19" height="1" fill="#000"/><rect x="21" y="2" width="1" height="1" fill="#fff"/><rect x="22" y="2" width="1" height="1" fill="#000"/><rect x="0" y="3" width="1" height="1" fill="#000"/><rect x="1" y="3" width="1" height="1" fill="#fff"/><rect x="2" y="3" width="19" height="1" fill="#000"/><rect x="21" y="3" width="1" height="1" fill="#fff"/><rect x="22" y="3" width="1" height="1" fill="#000"/><rect x="0" y="4" width="1" height="1" fill="#000"/><rect x="1" y="4" width="1" height="1" fill="#fff"/><rect x="2" y="4" width="1" height="1" fill="#000"/><rect x="3" y="4" width="2" height="1" fill="#fff"/><rect x="5" y="4" width="1" height="1" fill="#808080"/><rect x="6" y="4" width="1" height="1" fill="#fff"/><rect x="7" y="4" width="1" height="1" fill="#808080"/><rect x="8" y="4" width="8" height="1" fill="#fff"/><rect x="16" y="4" width="1" height="1" fill="#000"/><rect x="17" y="4" width="1" height="1" fill="#fff"/><rect x="18" y="4" width="1" height="1" fill="#000"/><rect x="19" y="4" width="1" height="1" fill="#fff"/><rect x="20" y="4" width="1" height="1" fill="#000"/><rect x="21" y="4" width="1" height="1" fill="#fff"/><rect x="22" y="4" width="1" height="1" fill="#000"/><rect x="0" y="5" width="1" height="1" fill="#000"/><rect x="1" y="5" width="1" height="1" fill="#fff"/><rect x="2" y="5" width="1" height="1" fill="#000"/><rect x="3" y="5" width="3" height="1" fill="#fff"/><rect x="6" y="5" width="1" height="1" fill="#808080"/><rect x="7" y="5" width="1" height="1" fill="#fff"/><rect x="8" y="5" width="1" height="1" fill="#808080"/><rect x="9" y="5" width="1" height="1" fill="#fff"/><rect x="10" y="5" width="1" height="1" fill="#808080"/><rect x="11" y="5" width="1" height="1" fill="#fff"/><rect x="12" y="5" width="1" height="1" fill="#808080"/><rect x="13" y="5" width="3" height="1" fill="#fff"/><rect x="16" y="5" width="1" height="1" fill="#000"/><rect x="17" y="5" width="1" height="1" fill="#fff"/><rect x="18" y="5" width="1" height="1" fill="#000"/><rect x="19" y="5" width="1" height="1" fill="#fff"/><rect x="20" y="5" width="1" height="1" fill="#000"/><rect x="21" y="5" width="1" height="1" fill="#fff"/><rect x="22" y="5" width="1" height="1" fill="#000"/><rect x="0" y="6" width="1" height="1" fill="#000"/><rect x="1" y="6" width="1" height="1" fill="#fff"/><rect x="2" y="6" width="1" height="1" fill="#000"/><rect x="3" y="6" width="13" height="1" fill="#fff"/><rect x="16" y="6" width="1" height="1" fill="#000"/><rect x="17" y="6" width="1" height="1" fill="#fff"/><rect x="18" y="6" width="1" height="1" fill="#000"/><rect x="19" y="6" width="1" height="1" fill="#fff"/><rect x="20" y="6" width="1" height="1" fill="#000"/><rect x="21" y="6" width="1" height="1" fill="#fff"/><rect x="22" y="6" width="1" height="1" fill="#000"/><rect x="0" y="7" width="1" height="1" fill="#000"/><rect x="1" y="7" width="1" height="1" fill="#fff"/><rect x="2" y="7" width="1" height="1" fill="#000"/><rect x="3" y="7" width="13" height="1" fill="#fff"/><rect x="16" y="7" width="1" height="1" fill="#000"/><rect x="17" y="7" width="1" height="1" fill="#fff"/><rect x="18" y="7" width="1" height="1" fill="#000"/><rect x="19" y="7" width="1" height="1" fill="#fff"/><rect x="20" y="7" width="1" height="1" fill="#000"/><rect x="21" y="7" width="1" height="1" fill="#fff"/><rect x="22" y="7" width="1" height="1" fill="#000"/><rect x="0" y="8" width="1" height="1" fill="#000"/><rect x="1" y="8" width="1" height="1" fill="#fff"/><rect x="2" y="8" width="1" height="1" fill="#000"/><rect x="3" y="8" width="13" height="1" fill="#fff"/><rect x="16" y="8" width="1" height="1" fill="#000"/><rect x="17" y="8" width="1" height="1" fill="#fff"/><rect x="18" y="8" width="1" height="1" fill="#000"/><rect x="19" y="8" width="1" height="1" fill="#fff"/><rect x="20" y="8" width="1" height="1" fill="#000"/><rect x="21" y="8" width="1" height="1" fill="#fff"/><rect x="22" y="8" width="1" height="1" fill="#000"/><rect x="0" y="9" width="1" height="1" fill="#000"/><rect x="1" y="9" width="1" height="1" fill="#fff"/><rect x="2" y="9" width="1" height="1" fill="#000"/><rect x="3" y="9" width="13" height="1" fill="#fff"/><rect x="16" y="9" width="1" height="1" fill="#000"/><rect x="17" y="9" width="1" height="1" fill="#fff"/><rect x="18" y="9" width="1" height="1" fill="#000"/><rect x="19" y="9" width="1" height="1" fill="#fff"/><rect x="20" y="9" width="1" height="1" fill="#000"/><rect x="21" y="9" width="1" height="1" fill="#fff"/><rect x="22" y="9" width="1" height="1" fill="#000"/><rect x="0" y="10" width="1" height="1" fill="#000"/><rect x="1" y="10" width="1" height="1" fill="#fff"/><rect x="2" y="10" width="1" height="1" fill="#000"/><rect x="3" y="10" width="13" height="1" fill="#fff"/><rect x="16" y="10" width="1" height="1" fill="#000"/><rect x="17" y="10" width="1" height="1" fill="#fff"/><rect x="18" y="10" width="1" height="1" fill="#000"/><rect x="19" y="10" width="1" height="1" fill="#fff"/><rect x="20" y="10" width="1" height="1" fill="#000"/><rect x="21" y="10" width="1" height="1" fill="#fff"/><rect x="22" y="10" width="1" height="1" fill="#000"/><rect x="0" y="11" width="1" height="1" fill="#000"/><rect x="1" y="11" width="1" height="1" fill="#fff"/><rect x="2" y="11" width="1" height="1" fill="#000"/><rect x="3" y="11" width="13" height="1" fill="#fff"/><rect x="16" y="11" width="1" height="1" fill="#000"/><rect x="17" y="11" width="1" height="1" fill="#fff"/><rect x="18" y="11" width="1" height="1" fill="#000"/><rect x="19" y="11" width="1" height="1" fill="#fff"/><rect x="20" y="11" width="1" height="1" fill="#000"/><rect x="21" y="11" width="1" height="1" fill="#fff"/><rect x="22" y="11" width="1" height="1" fill="#000"/><rect x="0" y="12" width="1" height="1" fill="#000"/><rect x="1" y="12" width="1" height="1" fill="#fff"/><rect x="2" y="12" width="1" height="1" fill="#000"/><rect x="3" y="12" width="13" height="1" fill="#fff"/><rect x="16" y="12" width="1" height="1" fill="#000"/><rect x="17" y="12" width="1" height="1" fill="#fff"/><rect x="18" y="12" width="1" height="1" fill="#000"/><rect x="19" y="12" width="1" height="1" fill="#fff"/><rect x="20" y="12" width="1" height="1" fill="#000"/><rect x="21" y="12" width="1" height="1" fill="#fff"/><rect x="22" y="12" width="1" height="1" fill="#000"/><rect x="0" y="13" width="1" height="1" fill="#000"/><rect x="1" y="13" width="1" height="1" fill="#fff"/><rect x="2" y="13" width="1" height="1" fill="#000"/><rect x="3" y="13" width="13" height="1" fill="#fff"/><rect x="16" y="13" width="1" height="1" fill="#000"/><rect x="17" y="13" width="1" height="1" fill="#fff"/><rect x="18" y="13" width="1" height="1" fill="#000"/><rect x="19" y="13" width="1" height="1" fill="#fff"/><rect x="20" y="13" width="1" height="1" fill="#000"/><rect x="21" y="13" width="1" height="1" fill="#fff"/><rect x="22" y="13" width="1" height="1" fill="#000"/><rect x="0" y="14" width="1" height="1" fill="#000"/><rect x="1" y="14" width="1" height="1" fill="#fff"/><rect x="2" y="14" width="1" height="1" fill="#000"/><rect x="3" y="14" width="13" height="1" fill="#fff"/><rect x="16" y="14" width="1" height="1" fill="#000"/><rect x="17" y="14" width="1" height="1" fill="#fff"/><rect x="18" y="14" width="1" height="1" fill="#000"/><rect x="19" y="14" width="1" height="1" fill="#fff"/><rect x="20" y="14" width="1" height="1" fill="#000"/><rect x="21" y="14" width="1" height="1" fill="#fff"/><rect x="22" y="14" width="1" height="1" fill="#000"/><rect x="0" y="15" width="1" height="1" fill="#000"/><rect x="1" y="15" width="1" height="1" fill="#fff"/><rect x="2" y="15" width="1" height="1" fill="#000"/><rect x="3" y="15" width="13" height="1" fill="#fff"/><rect x="16" y="15" width="1" height="1" fill="#000"/><rect x="17" y="15" width="1" height="1" fill="#fff"/><rect x="18" y="15" width="1" height="1" fill="#000"/><rect x="19" y="15" width="1" height="1" fill="#fff"/><rect x="20" y="15" width="1" height="1" fill="#000"/><rect x="21" y="15" width="1" height="1" fill="#fff"/><rect x="22" y="15" width="1" height="1" fill="#000"/><rect x="0" y="16" width="1" height="1" fill="#000"/><rect x="1" y="16" width="1" height="1" fill="#fff"/><rect x="2" y="16" width="1" height="1" fill="#000"/><rect x="3" y="16" width="13" height="1" fill="#fff"/><rect x="16" y="16" width="1" height="1" fill="#000"/><rect x="17" y="16" width="1" height="1" fill="#fff"/><rect x="18" y="16" width="1" height="1" fill="#000"/><rect x="19" y="16" width="1" height="1" fill="#fff"/><rect x="20" y="16" width="1" height="1" fill="#000"/><rect x="21" y="16" width="1" height="1" fill="#fff"/><rect x="22" y="16" width="1" height="1" fill="#000"/><rect x="0" y="17" width="1" height="1" fill="#000"/><rect x="1" y="17" width="1" height="1" fill="#fff"/><rect x="2" y="17" width="1" height="1" fill="#000"/><rect x="3" y="17" width="13" height="1" fill="#fff"/><rect x="16" y="17" width="1" height="1" fill="#000"/><rect x="17" y="17" width="1" height="1" fill="#fff"/><rect x="18" y="17" width="1" height="1" fill="#000"/><rect x="19" y="17" width="1" height="1" fill="#fff"/><rect x="20" y="17" width="1" height="1" fill="#000"/><rect x="21" y="17" width="1" height="1" fill="#fff"/><rect x="22" y="17" width="1" height="1" fill="#000"/><rect x="0" y="18" width="1" height="1" fill="#000"/><rect x="1" y="18" width="1" height="1" fill="#fff"/><rect x="2" y="18" width="1" height="1" fill="#000"/><rect x="3" y="18" width="13" height="1" fill="#fff"/><rect x="16" y="18" width="1" height="1" fill="#000"/><rect x="17" y="18" width="1" height="1" fill="#fff"/><rect x="18" y="18" width="1" height="1" fill="#000"/><rect x="19" y="18" width="1" height="1" fill="#fff"/><rect x="20" y="18" width="1" height="1" fill="#000"/><rect x="21" y="18" width="1" height="1" fill="#fff"/><rect x="22" y="18" width="1" height="1" fill="#000"/><rect x="0" y="19" width="1" height="1" fill="#000"/><rect x="1" y="19" width="1" height="1" fill="#fff"/><rect x="2" y="19" width="1" height="1" fill="#000"/><rect x="3" y="19" width="13" height="1" fill="#fff"/><rect x="16" y="19" width="1" height="1" fill="#000"/><rect x="17" y="19" width="1" height="1" fill="#fff"/><rect x="18" y="19" width="1" height="1" fill="#000"/><rect x="19" y="19" width="1" height="1" fill="#fff"/><rect x="20" y="19" width="1" height="1" fill="#000"/><rect x="21" y="19" width="1" height="1" fill="#fff"/><rect x="22" y="19" width="1" height="1" fill="#000"/><rect x="0" y="20" width="1" height="1" fill="#000"/><rect x="1" y="20" width="1" height="1" fill="#fff"/><rect x="2" y="20" width="1" height="1" fill="#000"/><rect x="3" y="20" width="13" height="1" fill="#fff"/><rect x="16" y="20" width="1" height="1" fill="#000"/><rect x="17" y="20" width="1" height="1" fill="#fff"/><rect x="18" y="20" width="1" height="1" fill="#000"/><rect x="19" y="20" width="1" height="1" fill="#fff"/><rect x="20" y="20" width="1" height="1" fill="#000"/><rect x="21" y="20" width="1" height="1" fill="#fff"/><rect x="22" y="20" width="1" height="1" fill="#000"/><rect x="0" y="21" width="1" height="1" fill="#000"/><rect x="1" y="21" width="1" height="1" fill="#fff"/><rect x="2" y="21" width="1" height="1" fill="#000"/><rect x="3" y="21" width="13" height="1" fill="#fff"/><rect x="16" y="21" width="1" height="1" fill="#000"/><rect x="17" y="21" width="1" height="1" fill="#fff"/><rect x="18" y="21" width="1" height="1" fill="#000"/><rect x="19" y="21" width="1" height="1" fill="#fff"/><rect x="20" y="21" width="1" height="1" fill="#000"/><rect x="21" y="21" width="1" height="1" fill="#fff"/><rect x="22" y="21" width="1" height="1" fill="#000"/><rect x="0" y="22" width="1" height="1" fill="#000"/><rect x="1" y="22" width="1" height="1" fill="#fff"/><rect x="2" y="22" width="1" height="1" fill="#000"/><rect x="3" y="22" width="13" height="1" fill="#fff"/><rect x="16" y="22" width="1" height="1" fill="#000"/><rect x="17" y="22" width="1" height="1" fill="#fff"/><rect x="18" y="22" width="1" height="1" fill="#000"/><rect x="19" y="22" width="1" height="1" fill="#fff"/><rect x="20" y="22" width="1" height="1" fill="#000"/><rect x="21" y="22" width="1" height="1" fill="#fff"/><rect x="22" y="22" width="1" height="1" fill="#000"/><rect x="0" y="23" width="1" height="1" fill="#000"/><rect x="1" y="23" width="1" height="1" fill="#fff"/><rect x="2" y="23" width="1" height="1" fill="#000"/><rect x="3" y="23" width="13" height="1" fill="#fff"/><rect x="16" y="23" width="1" height="1" fill="#000"/><rect x="17" y="23" width="1" height="1" fill="#fff"/><rect x="18" y="23" width="1" height="1" fill="#000"/><rect x="19" y="23" width="1" height="1" fill="#fff"/><rect x="20" y="23" width="1" height="1" fill="#000"/><rect x="21" y="23" width="1" height="1" fill="#fff"/><rect x="22" y="23" width="1" height="1" fill="#000"/><rect x="0" y="24" width="1" height="1" fill="#000"/><rect x="1" y="24" width="1" height="1" fill="#fff"/><rect x="2" y="24" width="1" height="1" fill="#000"/><rect x="3" y="24" width="13" height="1" fill="#fff"/><rect x="16" y="24" width="1" height="1" fill="#000"/><rect x="17" y="24" width="1" height="1" fill="#fff"/><rect x="18" y="24" width="1" height="1" fill="#000"/><rect x="19" y="24" width="1" height="1" fill="#fff"/><rect x="20" y="24" width="1" height="1" fill="#000"/><rect x="21" y="24" width="1" height="1" fill="#fff"/><rect x="22" y="24" width="1" height="1" fill="#000"/><rect x="0" y="25" width="1" height="1" fill="#000"/><rect x="1" y="25" width="1" height="1" fill="#fff"/><rect x="2" y="25" width="1" height="1" fill="#000"/><rect x="3" y="25" width="13" height="1" fill="#fff"/><rect x="16" y="25" width="1" height="1" fill="#000"/><rect x="17" y="25" width="1" height="1" fill="#fff"/><rect x="18" y="25" width="1" height="1" fill="#000"/><rect x="19" y="25" width="1" height="1" fill="#fff"/><rect x="20" y="25" width="1" height="1" fill="#000"/><rect x="21" y="25" width="1" height="1" fill="#fff"/><rect x="22" y="25" width="1" height="1" fill="#000"/><rect x="0" y="26" width="1" height="1" fill="#000"/><rect x="1" y="26" width="1" height="1" fill="#fff"/><rect x="2" y="26" width="1" height="1" fill="#000"/><rect x="3" y="26" width="13" height="1" fill="#fff"/><rect x="16" y="26" width="1" height="1" fill="#000"/><rect x="17" y="26" width="1" height="1" fill="#fff"/><rect x="18" y="26" width="1" height="1" fill="#000"/><rect x="19" y="26" width="1" height="1" fill="#fff"/><rect x="20" y="26" width="1" height="1" fill="#000"/><rect x="21" y="26" width="1" height="1" fill="#fff"/><rect x="22" y="26" width="1" height="1" fill="#000"/><rect x="0" y="27" width="1" height="1" fill="#000"/><rect x="1" y="27" width="1" height="1" fill="#fff"/><rect x="2" y="27" width="1" height="1" fill="#000"/><rect x="3" y="27" width="11" height="1" fill="#fff"/><rect x="14" y="27" width="1" height="1" fill="#000"/><rect x="15" y="27" width="1" height="1" fill="#fff"/><rect x="16" y="27" width="1" height="1" fill="#000"/><rect x="17" y="27" width="1" height="1" fill="#fff"/><rect x="18" y="27" width="1" height="1" fill="#000"/><rect x="19" y="27" width="1" height="1" fill="#fff"/><rect x="20" y="27" width="1" height="1" fill="#000"/><rect x="21" y="27" width="1" height="1" fill="#fff"/><rect x="22" y="27" width="1" height="1" fill="#000"/><rect x="0" y="28" width="1" height="1" fill="#000"/><rect x="1" y="28" width="1" height="1" fill="#fff"/><rect x="2" y="28" width="1" height="1" fill="#000"/><rect x="3" y="28" width="13" height="1" fill="#fff"/><rect x="16" y="28" width="1" height="1" fill="#000"/><rect x="17" y="28" width="1" height="1" fill="#fff"/><rect x="18" y="28" width="1" height="1" fill="#000"/><rect x="19" y="28" width="1" height="1" fill="#fff"/><rect x="20" y="28" width="1" height="1" fill="#000"/><rect x="21" y="28" width="1" height="1" fill="#fff"/><rect x="22" y="28" width="1" height="1" fill="#000"/><rect x="0" y="29" width="1" height="1" fill="#000"/><rect x="1" y="29" width="1" height="1" fill="#fff"/><rect x="2" y="29" width="1" height="1" fill="#000"/><rect x="3" y="29" width="13" height="1" fill="#fff"/><rect x="16" y="29" width="1" height="1" fill="#000"/><rect x="17" y="29" width="1" height="1" fill="#fff"/><rect x="18" y="29" width="1" height="1" fill="#000"/><rect x="19" y="29" width="1" height="1" fill="#fff"/><rect x="20" y="29" width="1" height="1" fill="#000"/><rect x="21" y="29" width="1" height="1" fill="#fff"/><rect x="22" y="29" width="1" height="1" fill="#000"/><rect x="0" y="30" width="1" height="1" fill="#000"/><rect x="1" y="30" width="1" height="1" fill="#fff"/><rect x="2" y="30" width="1" height="1" fill="#000"/><rect x="3" y="30" width="13" height="1" fill="#fff"/><rect x="16" y="30" width="1" height="1" fill="#000"/><rect x="17" y="30" width="1" height="1" fill="#fff"/><rect x="18" y="30" width="1" height="1" fill="#000"/><rect x="19" y="30" width="1" height="1" fill="#fff"/><rect x="20" y="30" width="1" height="1" fill="#000"/><rect x="21" y="30" width="1" height="1" fill="#fff"/><rect x="22" y="30" width="1" height="1" fill="#000"/><rect x="0" y="31" width="1" height="1" fill="#000"/><rect x="1" y="31" width="1" height="1" fill="#fff"/><rect x="2" y="31" width="1" height="1" fill="#000"/><rect x="3" y="31" width="13" height="1" fill="#fff"/><rect x="16" y="31" width="1" height="1" fill="#000"/><rect x="17" y="31" width="1" height="1" fill="#fff"/><rect x="18" y="31" width="1" height="1" fill="#000"/><rect x="19" y="31" width="1" height="1" fill="#fff"/><rect x="20" y="31" width="1" height="1" fill="#000"/><rect x="21" y="31" width="1" height="1" fill="#fff"/><rect x="22" y="31" width="1" height="1" fill="#000"/></svg><svg style="position:absolute;left:46px;top:228px;" width="14" height="18" viewBox="0 0 14 18" shape-rendering="crispEdges"><path d="M2.5 6.5L10 12M6.5 3.5L7.5 15.5" stroke="#800000" stroke-width="1.7" shape-rendering="auto"/></svg><svg style="position:absolute;left:38px;top:286px;" width="34" height="32" viewBox="0 0 34 32" shape-rendering="crispEdges"><rect x="10" y="1" width="23" height="31" fill="#000"/><rect x="11" y="5" width="21" height="3" fill="#fff"/><rect x="11" y="9" width="21" height="3" fill="#fff"/><rect x="11" y="13" width="21" height="3" fill="#fff"/><rect x="11" y="17" width="21" height="3" fill="#fff"/><rect x="11" y="21" width="21" height="3" fill="#fff"/><rect x="11" y="25" width="21" height="3" fill="#fff"/><rect x="11" y="29" width="21" height="2" fill="#fff"/><rect x="12" y="2" width="2" height="2" fill="#fff"/><rect x="16" y="2" width="3" height="2" fill="#fff"/><rect x="20" y="2" width="2" height="1" fill="#fff"/><rect x="23" y="2" width="2" height="2" fill="#fff"/><rect x="18" y="6" width="5" height="1" fill="#a0a0a0"/><rect x="24" y="10" width="4" height="1" fill="#a0a0a0"/><rect x="15" y="14" width="9" height="1" fill="#a0a0a0"/><rect x="25" y="18" width="4" height="1" fill="#a0a0a0"/><rect x="14" y="26" width="1" height="1" fill="#a0a0a0"/><rect x="1" y="18" width="18" height="1" fill="#000"/><rect x="2" y="19" width="16" height="12" fill="#000"/><rect x="3" y="19" width="14" height="11" fill="#fff"/><rect x="2" y="15" width="16" height="4" fill="#800000"/><rect x="3" y="14" width="14" height="1" fill="#800000"/><rect x="8" y="12" width="2" height="2" fill="#800000"/><rect x="1" y="18" width="1" height="1" fill="#000"/><rect x="18" y="18" width="1" height="1" fill="#000"/><rect x="7" y="10" width="1" height="1" fill="#c0c0c0"/><rect x="8" y="11" width="1" height="1" fill="#c0c0c0"/><rect x="4" y="21" width="5" height="5" fill="#000"/><rect x="5" y="22" width="1" height="1" fill="#fff"/><rect x="7" y="22" width="1" height="1" fill="#fff"/><rect x="5" y="24" width="1" height="1" fill="#fff"/><rect x="7" y="24" width="1" height="1" fill="#fff"/><rect x="11" y="21" width="5" height="5" fill="#000"/><rect x="12" y="22" width="1" height="1" fill="#fff"/><rect x="14" y="22" width="1" height="1" fill="#fff"/><rect x="12" y="24" width="1" height="1" fill="#fff"/><rect x="14" y="24" width="1" height="1" fill="#fff"/><rect x="8" y="27" width="4" height="4" fill="#000"/></svg><svg style="position:absolute;left:38px;top:349px;" width="34" height="34" viewBox="0 0 34 34" shape-rendering="crispEdges"><path d="M7 2h18v24h-18z" fill="#000"/><path d="M8 3h16v22h-16z" fill="#fff"/><path d="M13 8h18v24h-18z" fill="#000"/><path d="M14 9h16v22h-16z" fill="#fff"/><path d="M2 5h21v24h-21z" fill="#000"/><path d="M3 6h19v22h-19z" fill="#fff"/><path d="M23 13h7v1h-7zM23 19h7v1h-7zM23 25h7v1h-7zM10 11h8v1h-8zM10 17h8v1h-8zM10 23h8v1h-8z" fill="#000"/><path d="M4.5 11.5l2 2 3.5-4M4.5 17.5l2 2 3.5-4M4.5 23.5l2 2 3.5-4" stroke="#ff0000" stroke-width="1.6" fill="none" shape-rendering="auto"/></svg><span style="left:-4.700000000000003px;top:131px;width:120px;text-align:center;font:11px/13px 'Liberation Sans',sans-serif;color:#000;letter-spacing:-0.1px;">Staff</span><span style="left:-4.399999999999999px;top:195px;width:120px;text-align:center;font:11px/13px 'Liberation Sans',sans-serif;color:#000;letter-spacing:-0.2px;">Staff Groups</span><span style="left:-4px;top:259px;width:120px;text-align:center;font:11px/13px 'Liberation Sans',sans-serif;color:#000;letter-spacing:-0.1px;">Practice</span><span style="left:-4px;top:323px;width:120px;text-align:center;font:11px/13px 'Liberation Sans',sans-serif;color:#000;letter-spacing:-0.2px;">Organisation</span><span style="left:-4px;top:387px;width:120px;text-align:center;font:11px/13px 'Liberation Sans',sans-serif;color:#000;letter-spacing:-0.15px;">Test Requests</span><div style="left:111px;top:122px;width:220px;height:456px;background:#d4d0c8;box-shadow:inset 1px 1px #808080,inset -1px -1px #ffffff,inset 2px 2px #404040,inset -2px -2px #d4d0c8"></div><div style="left:115px;top:126px;width:58px;height:18px;background:#d4d0c8"></div><div style="left:117px;top:126px;width:54px;height:1px;background:#ffffff"></div><div style="left:116px;top:127px;width:1px;height:1px;background:#ffffff"></div><div style="left:115px;top:128px;width:1px;height:16px;background:#ffffff"></div><div style="left:171px;top:127px;width:1px;height:1px;background:#404040"></div><div style="left:172px;top:128px;width:1px;height:16px;background:#404040"></div><div style="left:171px;top:128px;width:1px;height:16px;background:#808080"></div><span style="left:129px;top:130px;font:11px/13px 'Liberation Sans',sans-serif;color:#000;letter-spacing:0.1px;"><u>S</u>taff</span><div style="left:173px;top:126px;width:87px;height:18px;background:#d4d0c8"></div><div style="left:175px;top:126px;width:83px;height:1px;background:#ffffff"></div><div style="left:174px;top:127px;width:1px;height:1px;background:#ffffff"></div><div style="left:173px;top:128px;width:1px;height:16px;background:#ffffff"></div><div style="left:258px;top:127px;width:1px;height:1px;background:#404040"></div><div style="left:259px;top:128px;width:1px;height:16px;background:#404040"></div><div style="left:258px;top:128px;width:1px;height:16px;background:#808080"></div><span style="left:187px;top:130px;font:11px/13px 'Liberation Sans',sans-serif;color:#000;letter-spacing:-0.2px;">Staff <u>G</u>roups</span><div style="left:260px;top:126px;width:67px;height:18px;background:#d4d0c8"></div><div style="left:262px;top:126px;width:63px;height:1px;background:#ffffff"></div><div style="left:261px;top:127px;width:1px;height:1px;background:#ffffff"></div><div style="left:260px;top:128px;width:1px;height:16px;background:#ffffff"></div><div style="left:325px;top:127px;width:1px;height:1px;background:#404040"></div><div style="left:326px;top:128px;width:1px;height:16px;background:#404040"></div><div style="left:325px;top:128px;width:1px;height:16px;background:#808080"></div><span style="left:274px;top:130px;font:11px/13px 'Liberation Sans',sans-serif;color:#000;letter-spacing:-0.1px;"><u>P</u>ractice</span><div style="left:218px;top:144px;width:109px;height:18px;background:#d4d0c8"></div><div style="left:220px;top:144px;width:105px;height:1px;background:#ffffff"></div><div style="left:219px;top:145px;width:1px;height:1px;background:#ffffff"></div><div style="left:218px;top:146px;width:1px;height:16px;background:#ffffff"></div><div style="left:325px;top:145px;width:1px;height:1px;background:#404040"></div><div style="left:326px;top:146px;width:1px;height:16px;background:#404040"></div><div style="left:325px;top:146px;width:1px;height:16px;background:#808080"></div><span style="left:237px;top:148px;font:11px/13px 'Liberation Sans',sans-serif;color:#000;letter-spacing:-0.05px;"><u>T</u>est Requests</span><div style="left:113px;top:162px;width:215px;height:1px;background:#ffffff"></div><div style="left:328px;top:162px;width:1px;height:5px;background:#404040"></div><div style="left:327px;top:163px;width:1px;height:2px;background:#808080"></div><div style="left:113px;top:142px;width:105px;height:23px;background:#d4d0c8"></div><div style="left:115px;top:142px;width:101px;height:1px;background:#ffffff"></div><div style="left:114px;top:143px;width:1px;height:1px;background:#ffffff"></div><div style="left:113px;top:144px;width:1px;height:21px;background:#ffffff"></div><div style="left:216px;top:143px;width:1px;height:1px;background:#404040"></div><div style="left:217px;top:144px;width:1px;height:21px;background:#404040"></div><div style="left:216px;top:144px;width:1px;height:21px;background:#808080"></div><span style="left:136px;top:146px;font:11px/13px 'Liberation Sans',sans-serif;color:#000;letter-spacing:-0.15px;"><u>O</u>rganisation</span><div style="left:113px;top:165px;width:216px;height:1px;background:#808080"></div><div style="left:113px;top:166px;width:216px;height:1px;background:#404040"></div><div style="left:113px;top:167px;width:216px;height:20px;background:#d4d0c8;box-shadow:inset -1px -1px #808080,inset 1px 1px #ffffff"></div><span style="left:116px;top:170px;font:11px/13px 'Liberation Sans',sans-serif;color:#000;letter-spacing:-0.15px;">Folder Items</span><svg style="position:absolute;left:317px;top:172px;" width="9" height="8" viewBox="0 0 9 8" shape-rendering="crispEdges"><path d="M0.5 0.5L8 7.5M8 0.5L0.5 7.5" stroke="#000" stroke-width="1.5" shape-rendering="auto"/></svg><div style="left:113px;top:187px;width:200px;height:373px;background:#fff;overflow:hidden"></div><div style="left:313px;top:187px;width:16px;height:373px;background-color:#fff;background-image:repeating-conic-gradient(#d4d0c8 0 25%,#fff 0 50%);background-size:2px 2px"></div><div style="left:313px;top:187px;width:16px;height:16px;background:#d4d0c8;box-shadow:inset -1px -1px #404040,inset 1px 1px #d4d0c8,inset -2px -2px #808080,inset 2px 2px #ffffff"></div><svg style="position:absolute;left:317px;top:192px;" width="7" height="4" viewBox="0 0 7 4" shape-rendering="crispEdges"><path d="M3 0h1v1h1v1h1v1h1v1h-7v-1h1v-1h1v-1h1z" fill="#000"/></svg><div style="left:313px;top:326px;width:16px;height:201px;background:#d4d0c8;box-shadow:inset -1px -1px #404040,inset 1px 1px #d4d0c8,inset -2px -2px #808080,inset 2px 2px #ffffff"></div><div style="left:313px;top:544px;width:16px;height:16px;background:#d4d0c8;box-shadow:inset -1px -1px #404040,inset 1px 1px #d4d0c8,inset -2px -2px #808080,inset 2px 2px #ffffff"></div><svg style="position:absolute;left:317px;top:549px;" width="7" height="4" viewBox="0 0 7 4" shape-rendering="crispEdges"><path d="M0 0h7v1h-1v1h-1v1h-1v1h-1v-1h-1v-1h-1v-1h-1z" fill="#000"/></svg><div style="left:113px;top:560px;width:200px;height:16px;background-color:#fff;background-image:repeating-conic-gradient(#d4d0c8 0 25%,#fff 0 50%);background-size:2px 2px"></div><div style="left:113px;top:560px;width:16px;height:16px;background:#d4d0c8;box-shadow:inset -1px -1px #404040,inset 1px 1px #d4d0c8,inset -2px -2px #808080,inset 2px 2px #ffffff"></div><svg style="position:absolute;left:118px;top:564px;" width="4" height="7" viewBox="0 0 4 7" shape-rendering="crispEdges"><path d="M3 0h1v7h-1v-1h-1v-1h-1v-1h-1v-1h1v-1h1v-1h1z" fill="#000"/></svg><div style="left:130px;top:560px;width:156px;height:16px;background:#d4d0c8;box-shadow:inset -1px -1px #404040,inset 1px 1px #d4d0c8,inset -2px -2px #808080,inset 2px 2px #ffffff"></div><div style="left:297px;top:560px;width:16px;height:16px;background:#d4d0c8;box-shadow:inset -1px -1px #404040,inset 1px 1px #d4d0c8,inset -2px -2px #808080,inset 2px 2px #ffffff"></div><svg style="position:absolute;left:303px;top:564px;" width="4" height="7" viewBox="0 0 4 7" shape-rendering="crispEdges"><path d="M0 0h1v1h1v1h1v1h1v1h-1v1h-1v1h-1v1h-1z" fill="#000"/></svg><div style="left:313px;top:560px;width:16px;height:16px;background:#d4d0c8"></div><svg width="0" height="0" style="position:absolute"><defs><pattern id="dy" width="2" height="2" patternUnits="userSpaceOnUse"><rect width="2" height="2" fill="#c0c0c0"/><rect width="1" height="1" fill="#ffff00"/><rect x="1" y="1" width="1" height="1" fill="#ffff00"/></pattern></defs></svg><div style="left:113px;top:187px;width:200px;height:373px;overflow:hidden"><div style="left:7px;top:0px;width:1px;height:380px;background:repeating-linear-gradient(to bottom,#808080 0 1px,transparent 1px 2px)"></div><div style="left:9px;top:8px;width:10px;height:1px;background:repeating-linear-gradient(to right,#808080 0 1px,transparent 1px 2px)"></div><svg style="position:absolute;left:20px;top:1px" width="15" height="13" shape-rendering="crispEdges"><path d="M1 0h6v1h-6zM7 1h1v1h-1zM8 2h6v1h-6zM0 1h1v11h-1zM13 3h1v9h-1zM0 11h14v1h-14z" fill="#808080"/><path d="M14 3h1v10h-1zM1 12h14v1h-14z" fill="#000"/><path d="M1 1h1v10h-1zM1 3h12v1h-12z" fill="#fff"/><path d="M2 1h5v2h-5zM2 4h11v7h-11z" fill="url(#dy)"/></svg><span style="left:40px;top:2px;font:11px/13px 'Liberation Sans',sans-serif;color:#000;letter-spacing:-0.281px">GP Branch surgery</span><div style="left:9px;top:24px;width:10px;height:1px;background:repeating-linear-gradient(to right,#808080 0 1px,transparent 1px 2px)"></div><svg style="position:absolute;left:20px;top:17px" width="15" height="13" shape-rendering="crispEdges"><path d="M1 0h6v1h-6zM7 1h1v1h-1zM8 2h6v1h-6zM0 1h1v11h-1zM13 3h1v9h-1zM0 11h14v1h-14z" fill="#808080"/><path d="M14 3h1v10h-1zM1 12h14v1h-14z" fill="#000"/><path d="M1 1h1v10h-1zM1 3h12v1h-12z" fill="#fff"/><path d="M2 1h5v2h-5zM2 4h11v7h-11z" fill="url(#dy)"/></svg><span style="left:40px;top:18px;font:11px/13px 'Liberation Sans',sans-serif;color:#000;letter-spacing:-0.306px">GP Connect Consumer</span><div style="left:9px;top:40px;width:10px;height:1px;background:repeating-linear-gradient(to right,#808080 0 1px,transparent 1px 2px)"></div><div style="left:3px;top:36px;width:9px;height:9px;background:#fff;box-shadow:inset 0 0 0 1px #808080"></div><div style="left:5px;top:40px;width:5px;height:1px;background:#000"></div><div style="left:7px;top:38px;width:1px;height:5px;background:#000"></div><div style="left:7px;top:36px;width:1px;height:9px;background:transparent"></div><svg style="position:absolute;left:20px;top:33px" width="15" height="13" shape-rendering="crispEdges"><path d="M1 0h6v1h-6zM7 1h1v1h-1zM8 2h6v1h-6zM0 1h1v11h-1zM13 3h1v9h-1zM0 11h14v1h-14z" fill="#808080"/><path d="M14 3h1v10h-1zM1 12h14v1h-14z" fill="#000"/><path d="M1 1h1v10h-1zM1 3h12v1h-12z" fill="#fff"/><path d="M2 1h5v2h-5zM2 4h11v7h-11z" fill="url(#dy)"/></svg><span style="left:40px;top:34px;font:11px/13px 'Liberation Sans',sans-serif;color:#000;letter-spacing:-0.150px">GP Practice</span><div style="left:9px;top:56px;width:10px;height:1px;background:repeating-linear-gradient(to right,#808080 0 1px,transparent 1px 2px)"></div><svg style="position:absolute;left:20px;top:49px" width="15" height="13" shape-rendering="crispEdges"><path d="M1 0h6v1h-6zM7 1h1v1h-1zM8 2h6v1h-6zM0 1h1v11h-1zM13 3h1v9h-1zM0 11h14v1h-14z" fill="#808080"/><path d="M14 3h1v10h-1zM1 12h14v1h-14z" fill="#000"/><path d="M1 1h1v10h-1zM1 3h12v1h-12z" fill="#fff"/><path d="M2 1h5v2h-5zM2 4h11v7h-11z" fill="url(#dy)"/></svg><span style="left:40px;top:50px;font:11px/13px 'Liberation Sans',sans-serif;color:#000;letter-spacing:0.500px">HA</span><div style="left:9px;top:72px;width:10px;height:1px;background:repeating-linear-gradient(to right,#808080 0 1px,transparent 1px 2px)"></div><div style="left:3px;top:68px;width:9px;height:9px;background:#fff;box-shadow:inset 0 0 0 1px #808080"></div><div style="left:5px;top:72px;width:5px;height:1px;background:#000"></div><div style="left:7px;top:70px;width:1px;height:5px;background:#000"></div><div style="left:7px;top:68px;width:1px;height:9px;background:transparent"></div><svg style="position:absolute;left:20px;top:65px" width="15" height="13" shape-rendering="crispEdges"><path d="M1 0h6v1h-6zM7 1h1v1h-1zM8 2h6v1h-6zM0 1h1v11h-1zM13 3h1v9h-1zM0 11h14v1h-14z" fill="#808080"/><path d="M14 3h1v10h-1zM1 12h14v1h-14z" fill="#000"/><path d="M1 1h1v10h-1zM1 3h12v1h-12z" fill="#fff"/><path d="M2 1h5v2h-5zM2 4h11v7h-11z" fill="url(#dy)"/></svg><span style="left:40px;top:66px;font:11px/13px 'Liberation Sans',sans-serif;color:#000;letter-spacing:-0.143px">Hospital</span><div style="left:9px;top:88px;width:10px;height:1px;background:repeating-linear-gradient(to right,#808080 0 1px,transparent 1px 2px)"></div><svg style="position:absolute;left:20px;top:81px" width="15" height="13" shape-rendering="crispEdges"><path d="M1 0h6v1h-6zM7 1h1v1h-1zM8 2h6v1h-6zM0 1h1v11h-1zM13 3h1v9h-1zM0 11h14v1h-14z" fill="#808080"/><path d="M14 3h1v10h-1zM1 12h14v1h-14z" fill="#000"/><path d="M1 1h1v10h-1zM1 3h12v1h-12z" fill="#fff"/><path d="M2 1h5v2h-5zM2 4h11v7h-11z" fill="url(#dy)"/></svg><span style="left:40px;top:82px;font:11px/13px 'Liberation Sans',sans-serif;color:#000;letter-spacing:-0.179px">In Practice Systems Practices</span><div style="left:9px;top:104px;width:10px;height:1px;background:repeating-linear-gradient(to right,#808080 0 1px,transparent 1px 2px)"></div><div style="left:3px;top:100px;width:9px;height:9px;background:#fff;box-shadow:inset 0 0 0 1px #808080"></div><div style="left:5px;top:104px;width:5px;height:1px;background:#000"></div><div style="left:7px;top:102px;width:1px;height:5px;background:#000"></div><div style="left:7px;top:100px;width:1px;height:9px;background:transparent"></div><svg style="position:absolute;left:20px;top:97px" width="15" height="13" shape-rendering="crispEdges"><path d="M1 0h6v1h-6zM7 1h1v1h-1zM8 2h6v1h-6zM0 1h1v11h-1zM13 3h1v9h-1zM0 11h14v1h-14z" fill="#808080"/><path d="M14 3h1v10h-1zM1 12h14v1h-14z" fill="#000"/><path d="M1 1h1v10h-1zM1 3h12v1h-12z" fill="#fff"/><path d="M2 1h5v2h-5zM2 4h11v7h-11z" fill="url(#dy)"/></svg><span style="left:40px;top:98px;font:11px/13px 'Liberation Sans',sans-serif;color:#000;letter-spacing:-0.25px">Insurance organisations for patien</span><div style="left:9px;top:120px;width:10px;height:1px;background:repeating-linear-gradient(to right,#808080 0 1px,transparent 1px 2px)"></div><svg style="position:absolute;left:20px;top:113px" width="15" height="13" shape-rendering="crispEdges"><path d="M1 0h6v1h-6zM7 1h1v1h-1zM8 2h6v1h-6zM0 1h1v11h-1zM13 3h1v9h-1zM0 11h14v1h-14z" fill="#808080"/><path d="M14 3h1v10h-1zM1 12h14v1h-14z" fill="#000"/><path d="M1 1h1v10h-1zM1 3h12v1h-12z" fill="#fff"/><path d="M2 1h5v2h-5zM2 4h11v7h-11z" fill="url(#dy)"/></svg><span style="left:40px;top:114px;font:11px/13px 'Liberation Sans',sans-serif;color:#000;letter-spacing:-0.125px">NHS Trust</span><div style="left:9px;top:136px;width:10px;height:1px;background:repeating-linear-gradient(to right,#808080 0 1px,transparent 1px 2px)"></div><div style="left:3px;top:132px;width:9px;height:9px;background:#fff;box-shadow:inset 0 0 0 1px #808080"></div><div style="left:5px;top:136px;width:5px;height:1px;background:#000"></div><div style="left:7px;top:134px;width:1px;height:5px;background:#000"></div><div style="left:7px;top:132px;width:1px;height:9px;background:transparent"></div><svg style="position:absolute;left:20px;top:129px" width="15" height="13" shape-rendering="crispEdges"><path d="M1 0h6v1h-6zM7 1h1v1h-1zM8 2h6v1h-6zM0 1h1v11h-1zM13 3h1v9h-1zM0 11h14v1h-14z" fill="#808080"/><path d="M14 3h1v10h-1zM1 12h14v1h-14z" fill="#000"/><path d="M1 1h1v10h-1zM1 3h12v1h-12z" fill="#fff"/><path d="M2 1h5v2h-5zM2 4h11v7h-11z" fill="url(#dy)"/></svg><span style="left:40px;top:130px;font:11px/13px 'Liberation Sans',sans-serif;color:#000;letter-spacing:-0.273px">Other Agency</span><div style="left:9px;top:152px;width:10px;height:1px;background:repeating-linear-gradient(to right,#808080 0 1px,transparent 1px 2px)"></div><svg style="position:absolute;left:20px;top:145px" width="15" height="13" shape-rendering="crispEdges"><path d="M1 0h6v1h-6zM7 1h1v1h-1zM8 2h6v1h-6zM0 1h1v11h-1zM13 3h1v9h-1zM0 11h14v1h-14z" fill="#808080"/><path d="M14 3h1v10h-1zM1 12h14v1h-14z" fill="#000"/><path d="M1 1h1v10h-1zM1 3h12v1h-12z" fill="#fff"/><path d="M2 1h5v2h-5zM2 4h11v7h-11z" fill="url(#dy)"/></svg><span style="left:40px;top:146px;font:11px/13px 'Liberation Sans',sans-serif;color:#000;letter-spacing:-0.238px">Parish Local Authority</span><div style="left:9px;top:168px;width:10px;height:1px;background:repeating-linear-gradient(to right,#808080 0 1px,transparent 1px 2px)"></div><div style="left:3px;top:164px;width:9px;height:9px;background:#fff;box-shadow:inset 0 0 0 1px #808080"></div><div style="left:5px;top:168px;width:5px;height:1px;background:#000"></div><div style="left:7px;top:166px;width:1px;height:5px;background:#000"></div><div style="left:7px;top:164px;width:1px;height:9px;background:transparent"></div><svg style="position:absolute;left:20px;top:161px" width="15" height="13" shape-rendering="crispEdges"><path d="M1 0h6v1h-6zM7 1h1v1h-1zM8 2h6v1h-6zM0 1h1v11h-1zM13 3h1v9h-1zM0 11h14v1h-14z" fill="#808080"/><path d="M14 3h1v10h-1zM1 12h14v1h-14z" fill="#000"/><path d="M1 1h1v10h-1zM1 3h12v1h-12z" fill="#fff"/><path d="M2 1h5v2h-5zM2 4h11v7h-11z" fill="url(#dy)"/></svg><span style="left:40px;top:162px;font:11px/13px 'Liberation Sans',sans-serif;color:#000;letter-spacing:-0.429px">Pharmacy</span><div style="left:9px;top:184px;width:10px;height:1px;background:repeating-linear-gradient(to right,#808080 0 1px,transparent 1px 2px)"></div><svg style="position:absolute;left:20px;top:177px" width="15" height="13" shape-rendering="crispEdges"><path d="M1 0h6v1h-6zM7 1h1v1h-1zM8 2h6v1h-6zM0 1h1v11h-1zM13 3h1v9h-1zM0 11h14v1h-14z" fill="#808080"/><path d="M14 3h1v10h-1zM1 12h14v1h-14z" fill="#000"/><path d="M1 1h1v10h-1zM1 3h12v1h-12z" fill="#fff"/><path d="M2 1h5v2h-5zM2 4h11v7h-11z" fill="url(#dy)"/></svg><span style="left:40px;top:178px;font:11px/13px 'Liberation Sans',sans-serif;color:#000;letter-spacing:-0.412px">Primary Care Group</span><div style="left:9px;top:200px;width:10px;height:1px;background:repeating-linear-gradient(to right,#808080 0 1px,transparent 1px 2px)"></div><div style="left:3px;top:196px;width:9px;height:9px;background:#fff;box-shadow:inset 0 0 0 1px #808080"></div><div style="left:5px;top:200px;width:5px;height:1px;background:#000"></div><div style="left:7px;top:198px;width:1px;height:5px;background:#000"></div><div style="left:7px;top:196px;width:1px;height:9px;background:transparent"></div><svg style="position:absolute;left:20px;top:193px" width="15" height="13" shape-rendering="crispEdges"><path d="M1 0h6v1h-6zM7 1h1v1h-1zM8 2h6v1h-6zM0 1h1v11h-1zM13 3h1v9h-1zM0 11h14v1h-14z" fill="#808080"/><path d="M14 3h1v10h-1zM1 12h14v1h-14z" fill="#000"/><path d="M1 1h1v10h-1zM1 3h12v1h-12z" fill="#fff"/><path d="M2 1h5v2h-5zM2 4h11v7h-11z" fill="url(#dy)"/></svg><span style="left:40px;top:194px;font:11px/13px 'Liberation Sans',sans-serif;color:#000;letter-spacing:-0.353px">Primary Care Trust</span><div style="left:9px;top:216px;width:10px;height:1px;background:repeating-linear-gradient(to right,#808080 0 1px,transparent 1px 2px)"></div><svg style="position:absolute;left:20px;top:209px" width="15" height="13" shape-rendering="crispEdges"><path d="M1 0h6v1h-6zM7 1h1v1h-1zM8 2h6v1h-6zM0 1h1v11h-1zM13 3h1v9h-1zM0 11h14v1h-14z" fill="#808080"/><path d="M14 3h1v10h-1zM1 12h14v1h-14z" fill="#000"/><path d="M1 1h1v10h-1zM1 3h12v1h-12z" fill="#fff"/><path d="M2 1h5v2h-5zM2 4h11v7h-11z" fill="url(#dy)"/></svg><span style="left:40px;top:210px;font:11px/13px 'Liberation Sans',sans-serif;color:#000;letter-spacing:-0.25px">Prison Services</span><div style="left:9px;top:232px;width:10px;height:1px;background:repeating-linear-gradient(to right,#808080 0 1px,transparent 1px 2px)"></div><svg style="position:absolute;left:20px;top:225px" width="15" height="13" shape-rendering="crispEdges"><path d="M1 0h6v1h-6zM7 1h1v1h-1zM8 2h6v1h-6zM0 1h1v11h-1zM13 3h1v9h-1zM0 11h14v1h-14z" fill="#808080"/><path d="M14 3h1v10h-1zM1 12h14v1h-14z" fill="#000"/><path d="M1 1h1v10h-1zM1 3h12v1h-12z" fill="#fff"/><path d="M2 1h5v2h-5zM2 4h11v7h-11z" fill="url(#dy)"/></svg><span style="left:40px;top:226px;font:11px/13px 'Liberation Sans',sans-serif;color:#000;letter-spacing:-0.25px">Professional Insurance organisatic</span><div style="left:9px;top:248px;width:10px;height:1px;background:repeating-linear-gradient(to right,#808080 0 1px,transparent 1px 2px)"></div><svg style="position:absolute;left:20px;top:241px" width="15" height="13" shape-rendering="crispEdges"><path d="M1 0h6v1h-6zM7 1h1v1h-1zM8 2h6v1h-6zM0 1h1v11h-1zM13 3h1v9h-1zM0 11h14v1h-14z" fill="#808080"/><path d="M14 3h1v10h-1zM1 12h14v1h-14z" fill="#000"/><path d="M1 1h1v10h-1zM1 3h12v1h-12z" fill="#fff"/><path d="M2 1h5v2h-5zM2 4h11v7h-11z" fill="url(#dy)"/></svg><span style="left:40px;top:242px;font:11px/13px 'Liberation Sans',sans-serif;color:#000;letter-spacing:-0.167px">Regional Health Authority</span><div style="left:9px;top:264px;width:10px;height:1px;background:repeating-linear-gradient(to right,#808080 0 1px,transparent 1px 2px)"></div><svg style="position:absolute;left:20px;top:257px" width="15" height="13" shape-rendering="crispEdges"><path d="M1 0h6v1h-6zM7 1h1v1h-1zM8 2h6v1h-6zM0 1h1v11h-1zM13 3h1v9h-1zM0 11h14v1h-14z" fill="#808080"/><path d="M14 3h1v10h-1zM1 12h14v1h-14z" fill="#000"/><path d="M1 1h1v10h-1zM1 3h12v1h-12z" fill="#fff"/><path d="M2 1h5v2h-5zM2 4h11v7h-11z" fill="url(#dy)"/></svg><span style="left:40px;top:258px;font:11px/13px 'Liberation Sans',sans-serif;color:#000;letter-spacing:-0.192px">Registered non-NHS Provider</span><div style="left:9px;top:280px;width:10px;height:1px;background:repeating-linear-gradient(to right,#808080 0 1px,transparent 1px 2px)"></div><div style="left:3px;top:276px;width:9px;height:9px;background:#fff;box-shadow:inset 0 0 0 1px #808080"></div><div style="left:5px;top:280px;width:5px;height:1px;background:#000"></div><div style="left:7px;top:276px;width:1px;height:9px;background:transparent"></div><svg style="position:absolute;left:20px;top:273px" width="15" height="13" shape-rendering="crispEdges"><path d="M1 0h6v1h-6zM7 1h1v1h-1zM8 2h6v1h-6zM0 1h1v11h-1zM13 3h1v9h-1zM0 11h14v1h-14z" fill="#808080"/><path d="M14 3h1v10h-1zM1 12h14v1h-14z" fill="#000"/><path d="M1 1h1v10h-1zM1 3h12v1h-12z" fill="#fff"/><path d="M2 1h5v2h-5zM2 4h11v7h-11z" fill="url(#dy)"/></svg><span style="left:40px;top:274px;font:11px/13px 'Liberation Sans',sans-serif;color:#000;letter-spacing:-0.190px">Residential Institutes</span><div style="left:27px;top:287px;width:1px;height:9px;background:repeating-linear-gradient(to bottom,#808080 0 1px,transparent 1px 2px)"></div><div style="left:29px;top:296px;width:10px;height:1px;background:repeating-linear-gradient(to right,#808080 0 1px,transparent 1px 2px)"></div><svg style="position:absolute;left:39px;top:289px" width="16" height="15" shape-rendering="crispEdges"><rect x="3" y="0" width="1" height="1" fill="#c0c0c0"/><rect x="7" y="0" width="9" height="1" fill="#000"/><rect x="4" y="1" width="1" height="1" fill="#c0c0c0"/><rect x="7" y="1" width="1" height="1" fill="#000"/><rect x="8" y="1" width="3" height="1" fill="#fff"/><rect x="11" y="1" width="3" height="1" fill="#000"/><rect x="14" y="1" width="2" height="1" fill="#fff"/><rect x="7" y="2" width="1" height="1" fill="#000"/><rect x="8" y="2" width="5" height="1" fill="#fff"/><rect x="13" y="2" width="2" height="1" fill="#000"/><rect x="15" y="2" width="1" height="1" fill="#fff"/><rect x="5" y="3" width="1" height="1" fill="#800000"/><rect x="8" y="3" width="1" height="1" fill="#000"/><rect x="9" y="3" width="4" height="1" fill="#fff"/><rect x="13" y="3" width="2" height="1" fill="#000"/><rect x="15" y="3" width="1" height="1" fill="#fff"/><rect x="2" y="4" width="7" height="1" fill="#800000"/><rect x="9" y="4" width="2" height="1" fill="#000"/><rect x="11" y="4" width="5" height="1" fill="#fff"/><rect x="0" y="5" width="1" height="1" fill="#000"/><rect x="1" y="5" width="8" height="1" fill="#800000"/><rect x="9" y="5" width="1" height="1" fill="#000"/><rect x="10" y="5" width="3" height="1" fill="#fff"/><rect x="13" y="5" width="2" height="1" fill="#000"/><rect x="15" y="5" width="1" height="1" fill="#fff"/><rect x="0" y="6" width="1" height="1" fill="#000"/><rect x="1" y="6" width="7" height="1" fill="#fff"/><rect x="8" y="6" width="4" height="1" fill="#000"/><rect x="12" y="6" width="4" height="1" fill="#fff"/><rect x="0" y="7" width="1" height="1" fill="#000"/><rect x="1" y="7" width="1" height="1" fill="#fff"/><rect x="2" y="7" width="2" height="1" fill="#000"/><rect x="4" y="7" width="1" height="1" fill="#fff"/><rect x="5" y="7" width="2" height="1" fill="#000"/><rect x="7" y="7" width="1" height="1" fill="#fff"/><rect x="8" y="7" width="1" height="1" fill="#000"/><rect x="9" y="7" width="4" height="1" fill="#fff"/><rect x="13" y="7" width="2" height="1" fill="#000"/><rect x="15" y="7" width="1" height="1" fill="#fff"/><rect x="0" y="8" width="1" height="1" fill="#000"/><rect x="1" y="8" width="1" height="1" fill="#fff"/><rect x="2" y="8" width="2" height="1" fill="#000"/><rect x="4" y="8" width="1" height="1" fill="#fff"/><rect x="5" y="8" width="2" height="1" fill="#000"/><rect x="7" y="8" width="1" height="1" fill="#fff"/><rect x="8" y="8" width="1" height="1" fill="#000"/><rect x="9" y="8" width="3" height="1" fill="#fff"/><rect x="12" y="8" width="4" height="1" fill="#000"/><rect x="0" y="9" width="1" height="1" fill="#000"/><rect x="1" y="9" width="7" height="1" fill="#fff"/><rect x="8" y="9" width="2" height="1" fill="#000"/><rect x="10" y="9" width="1" height="1" fill="#fff"/><rect x="11" y="9" width="2" height="1" fill="#000"/><rect x="13" y="9" width="3" height="1" fill="#fff"/><rect x="0" y="10" width="1" height="1" fill="#000"/><rect x="1" y="10" width="3" height="1" fill="#fff"/><rect x="4" y="10" width="1" height="1" fill="#000"/><rect x="5" y="10" width="3" height="1" fill="#fff"/><rect x="8" y="10" width="1" height="1" fill="#000"/><rect x="9" y="10" width="3" height="1" fill="#fff"/><rect x="12" y="10" width="2" height="1" fill="#000"/><rect x="14" y="10" width="2" height="1" fill="#fff"/><rect x="0" y="11" width="1" height="1" fill="#000"/><rect x="1" y="11" width="2" height="1" fill="#fff"/><rect x="3" y="11" width="3" height="1" fill="#000"/><rect x="6" y="11" width="2" height="1" fill="#fff"/><rect x="8" y="11" width="3" height="1" fill="#000"/><rect x="11" y="11" width="2" height="1" fill="#fff"/><rect x="13" y="11" width="3" height="1" fill="#000"/><rect x="0" y="12" width="1" height="1" fill="#000"/><rect x="1" y="12" width="2" height="1" fill="#fff"/><rect x="3" y="12" width="3" height="1" fill="#000"/><rect x="6" y="12" width="2" height="1" fill="#fff"/><rect x="8" y="12" width="3" height="1" fill="#000"/><rect x="11" y="12" width="3" height="1" fill="#fff"/><rect x="14" y="12" width="2" height="1" fill="#000"/><rect x="0" y="13" width="1" height="1" fill="#000"/><rect x="1" y="13" width="2" height="1" fill="#fff"/><rect x="3" y="13" width="3" height="1" fill="#000"/><rect x="6" y="13" width="2" height="1" fill="#fff"/><rect x="8" y="13" width="3" height="1" fill="#000"/><rect x="11" y="13" width="3" height="1" fill="#fff"/><rect x="14" y="13" width="2" height="1" fill="#000"/><rect x="0" y="14" width="16" height="1" fill="#000"/></svg><div style="left:58px;top:288px;width:101px;height:16px;background:#d4d0c8"></div><span style="left:60px;top:290px;font:11px/13px 'Liberation Sans',sans-serif;color:#000;letter-spacing:-0.294px">Grove Nursing home</span><div style="left:9px;top:312px;width:10px;height:1px;background:repeating-linear-gradient(to right,#808080 0 1px,transparent 1px 2px)"></div><svg style="position:absolute;left:20px;top:305px" width="15" height="13" shape-rendering="crispEdges"><path d="M1 0h6v1h-6zM7 1h1v1h-1zM8 2h6v1h-6zM0 1h1v11h-1zM13 3h1v9h-1zM0 11h14v1h-14z" fill="#808080"/><path d="M14 3h1v10h-1zM1 12h14v1h-14z" fill="#000"/><path d="M1 1h1v10h-1zM1 3h12v1h-12z" fill="#fff"/><path d="M2 1h5v2h-5zM2 4h11v7h-11z" fill="url(#dy)"/></svg><span style="left:40px;top:306px;font:11px/13px 'Liberation Sans',sans-serif;color:#000;letter-spacing:0.000px">School</span><div style="left:9px;top:328px;width:10px;height:1px;background:repeating-linear-gradient(to right,#808080 0 1px,transparent 1px 2px)"></div><svg style="position:absolute;left:20px;top:321px" width="15" height="13" shape-rendering="crispEdges"><path d="M1 0h6v1h-6zM7 1h1v1h-1zM8 2h6v1h-6zM0 1h1v11h-1zM13 3h1v9h-1zM0 11h14v1h-14z" fill="#808080"/><path d="M14 3h1v10h-1zM1 12h14v1h-14z" fill="#000"/><path d="M1 1h1v10h-1zM1 3h12v1h-12z" fill="#fff"/><path d="M2 1h5v2h-5zM2 4h11v7h-11z" fill="url(#dy)"/></svg><span style="left:40px;top:322px;font:11px/13px 'Liberation Sans',sans-serif;color:#000;letter-spacing:-0.267px">Self-Help Groups</span><div style="left:9px;top:344px;width:10px;height:1px;background:repeating-linear-gradient(to right,#808080 0 1px,transparent 1px 2px)"></div><svg style="position:absolute;left:20px;top:337px" width="15" height="13" shape-rendering="crispEdges"><path d="M1 0h6v1h-6zM7 1h1v1h-1zM8 2h6v1h-6zM0 1h1v11h-1zM13 3h1v9h-1zM0 11h14v1h-14z" fill="#808080"/><path d="M14 3h1v10h-1zM1 12h14v1h-14z" fill="#000"/><path d="M1 1h1v10h-1zM1 3h12v1h-12z" fill="#fff"/><path d="M2 1h5v2h-5zM2 4h11v7h-11z" fill="url(#dy)"/></svg><span style="left:40px;top:338px;font:11px/13px 'Liberation Sans',sans-serif;color:#000;letter-spacing:-0.200px">Social Services Department</span><div style="left:9px;top:360px;width:10px;height:1px;background:repeating-linear-gradient(to right,#808080 0 1px,transparent 1px 2px)"></div><svg style="position:absolute;left:20px;top:353px" width="15" height="13" shape-rendering="crispEdges"><path d="M1 0h6v1h-6zM7 1h1v1h-1zM8 2h6v1h-6zM0 1h1v11h-1zM13 3h1v9h-1zM0 11h14v1h-14z" fill="#808080"/><path d="M14 3h1v10h-1zM1 12h14v1h-14z" fill="#000"/><path d="M1 1h1v10h-1zM1 3h12v1h-12z" fill="#fff"/><path d="M2 1h5v2h-5zM2 4h11v7h-11z" fill="url(#dy)"/></svg><span style="left:40px;top:354px;font:11px/13px 'Liberation Sans',sans-serif;color:#000;letter-spacing:-0.174px">Special Health Authority</span><div style="left:9px;top:376px;width:10px;height:1px;background:repeating-linear-gradient(to right,#808080 0 1px,transparent 1px 2px)"></div><div style="left:3px;top:372px;width:9px;height:9px;background:#fff;box-shadow:inset 0 0 0 1px #808080"></div><div style="left:5px;top:376px;width:5px;height:1px;background:#000"></div><div style="left:7px;top:374px;width:1px;height:5px;background:#000"></div><div style="left:7px;top:372px;width:1px;height:9px;background:transparent"></div><svg style="position:absolute;left:20px;top:369px" width="15" height="13" shape-rendering="crispEdges"><path d="M1 0h6v1h-6zM7 1h1v1h-1zM8 2h6v1h-6zM0 1h1v11h-1zM13 3h1v9h-1zM0 11h14v1h-14z" fill="#808080"/><path d="M14 3h1v10h-1zM1 12h14v1h-14z" fill="#000"/><path d="M1 1h1v10h-1zM1 3h12v1h-12z" fill="#fff"/><path d="M2 1h5v2h-5zM2 4h11v7h-11z" fill="url(#dy)"/></svg><span style="left:40px;top:370px;font:11px/13px 'Liberation Sans',sans-serif;color:#000;letter-spacing:-0.25px">TPUP/OOH/CSA</span></div><div style="left:443px;top:124px;width:58px;height:20px;background:#d4d0c8"></div><div style="left:445px;top:124px;width:54px;height:1px;background:#ffffff"></div><div style="left:444px;top:125px;width:1px;height:1px;background:#ffffff"></div><div style="left:443px;top:126px;width:1px;height:18px;background:#ffffff"></div><div style="left:499px;top:125px;width:1px;height:1px;background:#404040"></div><div style="left:500px;top:126px;width:1px;height:18px;background:#404040"></div><div style="left:499px;top:126px;width:1px;height:18px;background:#808080"></div><span style="left:450px;top:128px;font:11px/13px 'Liberation Sans',sans-serif;color:#000;letter-spacing:-0.15px;"><u>I</u>dentifiers</span><div style="left:501px;top:124px;width:60px;height:20px;background:#d4d0c8"></div><div style="left:503px;top:124px;width:56px;height:1px;background:#ffffff"></div><div style="left:502px;top:125px;width:1px;height:1px;background:#ffffff"></div><div style="left:501px;top:126px;width:1px;height:18px;background:#ffffff"></div><div style="left:559px;top:125px;width:1px;height:1px;background:#404040"></div><div style="left:560px;top:126px;width:1px;height:18px;background:#404040"></div><div style="left:559px;top:126px;width:1px;height:18px;background:#808080"></div><span style="left:507px;top:128px;font:11px/13px 'Liberation Sans',sans-serif;color:#000;letter-spacing:-0.2px;"><u>A</u>ddresses</span><div style="left:446px;top:142px;width:460px;height:1px;background:#ffffff"></div><div style="left:906px;top:142px;width:1px;height:4px;background:#404040"></div><div style="left:905px;top:143px;width:1px;height:2px;background:#808080"></div><div style="left:336px;top:122px;width:110px;height:22px;background:#d4d0c8"></div><div style="left:338px;top:122px;width:106px;height:1px;background:#ffffff"></div><div style="left:337px;top:123px;width:1px;height:1px;background:#ffffff"></div><div style="left:336px;top:124px;width:1px;height:20px;background:#ffffff"></div><div style="left:444px;top:123px;width:1px;height:1px;background:#404040"></div><div style="left:445px;top:124px;width:1px;height:20px;background:#404040"></div><div style="left:444px;top:124px;width:1px;height:20px;background:#808080"></div><span style="left:344px;top:126px;font:11px/13px 'Liberation Sans',sans-serif;color:#000;letter-spacing:-0.25px;">O<u>r</u>ganisation Details</span><div style="left:336px;top:144px;width:1px;height:2px;background:#ffffff"></div><div style="left:338px;top:145px;width:568px;height:1px;background:#808080"></div><div style="left:336px;top:146px;width:571px;height:1px;background:#404040"></div><div style="left:336px;top:147px;width:571px;height:431px;background:#d4d0c8;box-shadow:inset 1px 1px #808080,inset -1px -1px #ffffff,inset 2px 2px #404040,inset -2px -2px #d4d0c8"></div><span style="left:346px;top:158px;font:11px/13px 'Liberation Sans',sans-serif;color:#000080;letter-spacing:-0.2px;">Category:</span><div style="left:346px;top:173px;width:306px;height:21px;background:#ffffff;box-shadow:inset 1px 1px #808080,inset -1px -1px #ffffff,inset 2px 2px #404040,inset -2px -2px #d4d0c8"></div><div style="left:349px;top:176px;width:285px;height:15px;background:#0a246a"></div><div style="left:349px;top:176px;width:285px;height:15px;box-shadow:inset 0 0 0 1px #000"></div><div style="left:349px;top:176px;width:285px;height:15px;border:1px dotted #f0e8a0"></div><span style="left:351px;top:178px;font:11px/13px 'Liberation Sans',sans-serif;color:#fff;letter-spacing:-0.190px;">Residential Institutes</span><div style="left:634px;top:175px;width:16px;height:17px;background:#d4d0c8;box-shadow:inset -1px -1px #404040,inset 1px 1px #d4d0c8,inset -2px -2px #808080,inset 2px 2px #ffffff"></div><svg style="position:absolute;left:638px;top:181px;" width="7" height="4" viewBox="0 0 7 4" shape-rendering="crispEdges"><path d="M0 0h7v1h-1v1h-1v1h-1v1h-1v-1h-1v-1h-1v-1h-1z" fill="#000"/></svg><span style="left:346px;top:198px;font:11px/13px 'Liberation Sans',sans-serif;color:#000080;letter-spacing:-0.1px;">Name:</span><div style="left:346px;top:213px;width:277px;height:19px;background:#ffffff;box-shadow:inset 1px 1px #808080,inset -1px -1px #ffffff,inset 2px 2px #404040,inset -2px -2px #d4d0c8"></div><span style="left:349px;top:217px;font:11px/13px 'Liberation Sans',sans-serif;color:#000;letter-spacing:-0.235px;">Grove Nursing home</span><span style="left:346px;top:238px;font:11px/13px 'Liberation Sans',sans-serif;color:#000080;letter-spacing:-0.15px;">Mnemonic:</span><div style="left:346px;top:253px;width:120px;height:19px;background:#ffffff;box-shadow:inset 1px 1px #808080,inset -1px -1px #ffffff,inset 2px 2px #404040,inset -2px -2px #d4d0c8"></div><span style="left:348px;top:257px;font:11px/13px 'Liberation Sans',sans-serif;color:#000;letter-spacing:0px;">GROVE</span><span style="left:346px;top:278px;font:11px/13px 'Liberation Sans',sans-serif;color:#000080;letter-spacing:-0.35px;">Valid From:</span><div style="left:346px;top:293px;width:113px;height:19px;background:#ffffff;box-shadow:inset 1px 1px #808080,inset -1px -1px #ffffff,inset 2px 2px #404040,inset -2px -2px #d4d0c8"></div><span style="left:349px;top:297px;font:11px/13px 'Liberation Sans',sans-serif;color:#000;letter-spacing:0.4px;">08/10/2020</span><span style="left:482px;top:278px;font:11px/13px 'Liberation Sans',sans-serif;color:#000080;letter-spacing:-0.15px;">Valid Until:</span><div style="left:482px;top:292px;width:113px;height:19px;background:#ffffff;box-shadow:inset 1px 1px #808080,inset -1px -1px #ffffff,inset 2px 2px #404040,inset -2px -2px #d4d0c8"></div><div style="left:346px;top:328px;width:13px;height:13px;background:#ffffff;box-shadow:inset 1px 1px #808080,inset -1px -1px #ffffff,inset 2px 2px #404040,inset -2px -2px #d4d0c8"></div><span style="left:364px;top:329px;font:11px/13px 'Liberation Sans',sans-serif;color:#000080;letter-spacing:-0.1px;">Inactive</span><div style="left:423px;top:329px;width:13px;height:13px;background:#ffffff;box-shadow:inset 1px 1px #808080,inset -1px -1px #ffffff,inset 2px 2px #404040,inset -2px -2px #d4d0c8"></div><span style="left:441px;top:330px;font:11px/13px 'Liberation Sans',sans-serif;color:#000080;letter-spacing:-0.2px;">Provider Unit</span><div style="left:662px;top:163px;width:237px;height:158px;box-shadow:inset 1px 1px #808080,inset -1px -1px #ffffff,inset 2px 2px #ffffff,inset -2px -2px #808080"></div><div style="left:668px;top:158px;width:72px;height:10px;background:#d4d0c8"></div><span style="left:672px;top:158px;font:11px/13px 'Liberation Sans',sans-serif;color:#000080;letter-spacing:-0.2px;">Main Address:</span><div style="left:670px;top:174px;width:221px;height:112px;background:#ffffff;box-shadow:inset 1px 1px #808080,inset -1px -1px #ffffff,inset 2px 2px #404040,inset -2px -2px #d4d0c8"></div><div style="left:873px;top:176px;width:16px;height:93px;background-color:#fff;background-image:repeating-conic-gradient(#d4d0c8 0 25%,#fff 0 50%);background-size:2px 2px"></div><div style="left:873px;top:176px;width:16px;height:16px;background:#d4d0c8;box-shadow:inset -1px -1px #404040,inset 1px 1px #d4d0c8,inset -2px -2px #808080,inset 2px 2px #ffffff"></div><svg style="position:absolute;left:877px;top:181px;" width="7" height="5" viewBox="0 0 7 5" shape-rendering="crispEdges"><path d="M3 0h1v1h1v1h1v1h1v1h-7v-1h1v-1h1v-1h1z" fill="#808080"/><path d="M1 4h7v1h-7z" fill="#fff"/></svg><div style="left:873px;top:253px;width:16px;height:16px;background:#d4d0c8;box-shadow:inset -1px -1px #404040,inset 1px 1px #d4d0c8,inset -2px -2px #808080,inset 2px 2px #ffffff"></div><svg style="position:absolute;left:877px;top:258px;" width="7" height="5" viewBox="0 0 7 5" shape-rendering="crispEdges"><path d="M0 0h7v1h-1v1h-1v1h-1v1h-1v-1h-1v-1h-1v-1h-1z" fill="#808080"/><path d="M4 4h1v1h-1zM5 3h1v1h-1zM6 2h1v1h-1zM7 1h1v1h-1z" fill="#fff"/></svg><div style="left:672px;top:269px;width:201px;height:16px;background-color:#fff;background-image:repeating-conic-gradient(#d4d0c8 0 25%,#fff 0 50%);background-size:2px 2px"></div><div style="left:672px;top:269px;width:16px;height:16px;background:#d4d0c8;box-shadow:inset -1px -1px #404040,inset 1px 1px #d4d0c8,inset -2px -2px #808080,inset 2px 2px #ffffff"></div><svg style="position:absolute;left:678px;top:273px;" width="5" height="8" viewBox="0 0 5 8" shape-rendering="crispEdges"><path d="M3 0h1v7h-1v-1h-1v-1h-1v-1h-1v-1h1v-1h1v-1h1z" fill="#808080"/><path d="M4 7h1v1h-1z" fill="#fff"/></svg><div style="left:857px;top:269px;width:16px;height:16px;background:#d4d0c8;box-shadow:inset -1px -1px #404040,inset 1px 1px #d4d0c8,inset -2px -2px #808080,inset 2px 2px #ffffff"></div><svg style="position:absolute;left:863px;top:273px;" width="5" height="8" viewBox="0 0 5 8" shape-rendering="crispEdges"><path d="M0 0h1v1h1v1h1v1h1v1h-1v1h-1v1h-1v1h-1z" fill="#808080"/><path d="M1 7h1v1h-1zM2 6h1v1h-1zM3 5h1v1h-1zM4 4h1v1h-1z" fill="#fff"/></svg><div style="left:873px;top:269px;width:16px;height:16px;background:#d4d0c8"></div><div style="left:670px;top:291px;width:54px;height:25px;background:#d4d0c8;box-shadow:inset -1px -1px #404040,inset 1px 1px #ffffff,inset -2px -2px #808080;"></div><span style="left:637px;top:298px;width:120px;text-align:center;font:11px/13px 'Liberation Sans',sans-serif;color:#000;letter-spacing:-0.15px;">Add</span><div style="left:726px;top:291px;width:54px;height:25px;background:#d4d0c8;box-shadow:inset -1px -1px #404040,inset 1px 1px #ffffff,inset -2px -2px #808080;"></div><span style="left:693.5px;top:298px;width:120px;text-align:center;font:11px/13px 'Liberation Sans',sans-serif;color:#808080;letter-spacing:-0.15px;text-shadow:1px 1px #fff;">Edit</span><div style="left:782px;top:291px;width:54px;height:25px;background:#d4d0c8;box-shadow:inset -1px -1px #404040,inset 1px 1px #ffffff,inset -2px -2px #808080;"></div><span style="left:749.5px;top:298px;width:120px;text-align:center;font:11px/13px 'Liberation Sans',sans-serif;color:#808080;letter-spacing:-0.15px;text-shadow:1px 1px #fff;">Delete</span><div style="left:838px;top:291px;width:54px;height:25px;background:#d4d0c8;box-shadow:inset -1px -1px #404040,inset 1px 1px #ffffff,inset -2px -2px #808080;"></div><span style="left:805.5px;top:298px;width:120px;text-align:center;font:11px/13px 'Liberation Sans',sans-serif;color:#808080;letter-spacing:-0.15px;text-shadow:1px 1px #fff;">Audit</span><div style="left:515px;top:453px;width:73px;height:26px;background:#d4d0c8;box-shadow:inset 0 0 0 1px #000,inset -2px -2px #404040,inset 2px 2px #ffffff,inset -3px -3px #808080"></div><span style="left:491.5px;top:460px;width:120px;text-align:center;font:11px/13px 'Liberation Sans',sans-serif;color:#000;letter-spacing:-0.1px;"><u>O</u>K</span><div style="left:597px;top:453px;width:73px;height:26px;background:#d4d0c8;box-shadow:inset -1px -1px #404040,inset 1px 1px #ffffff,inset -2px -2px #808080;"></div><span style="left:573.5px;top:460px;width:120px;text-align:center;font:11px/13px 'Liberation Sans',sans-serif;color:#000;letter-spacing:-0.15px;"><u>C</u>ancel</span><div style="left:338px;top:560px;width:567px;height:16px;background:#d4d0c8"></div><div style="left:338px;top:560px;width:16px;height:16px;background:#d4d0c8;box-shadow:inset -1px -1px #404040,inset 1px 1px #d4d0c8,inset -2px -2px #808080,inset 2px 2px #ffffff"></div><svg style="position:absolute;left:343px;top:564px;" width="4" height="7" viewBox="0 0 4 7" shape-rendering="crispEdges"><path d="M3 0h1v7h-1v-1h-1v-1h-1v-1h-1v-1h1v-1h1v-1h1z" fill="#000"/></svg><div style="left:354px;top:560px;width:529px;height:16px;background:#d4d0c8;box-shadow:inset -1px -1px #404040,inset 1px 1px #d4d0c8,inset -2px -2px #808080,inset 2px 2px #ffffff"></div><div style="left:883px;top:560px;width:6px;height:16px;background-color:#fff;background-image:repeating-conic-gradient(#d4d0c8 0 25%,#fff 0 50%);background-size:2px 2px"></div><div style="left:889px;top:560px;width:16px;height:16px;background:#d4d0c8;box-shadow:inset -1px -1px #404040,inset 1px 1px #d4d0c8,inset -2px -2px #808080,inset 2px 2px #ffffff"></div><svg style="position:absolute;left:895px;top:564px;" width="4" height="7" viewBox="0 0 4 7" shape-rendering="crispEdges"><path d="M0 0h1v1h1v1h1v1h1v1h-1v1h-1v1h-1v1h-1z" fill="#000"/></svg><svg style="position:absolute;left:898px;top:586px;" width="12" height="12" viewBox="0 0 12 12" shape-rendering="crispEdges"><path d="M11 1L1 11M11 5L5 11M11 9L9 11" stroke="#808080" stroke-width="1" shape-rendering="auto"/><path d="M11 2L2 11M11 6L6 11M11 10L10 11" stroke="#fff" stroke-width="1" shape-rendering="auto"/></svg>
</body></html>
